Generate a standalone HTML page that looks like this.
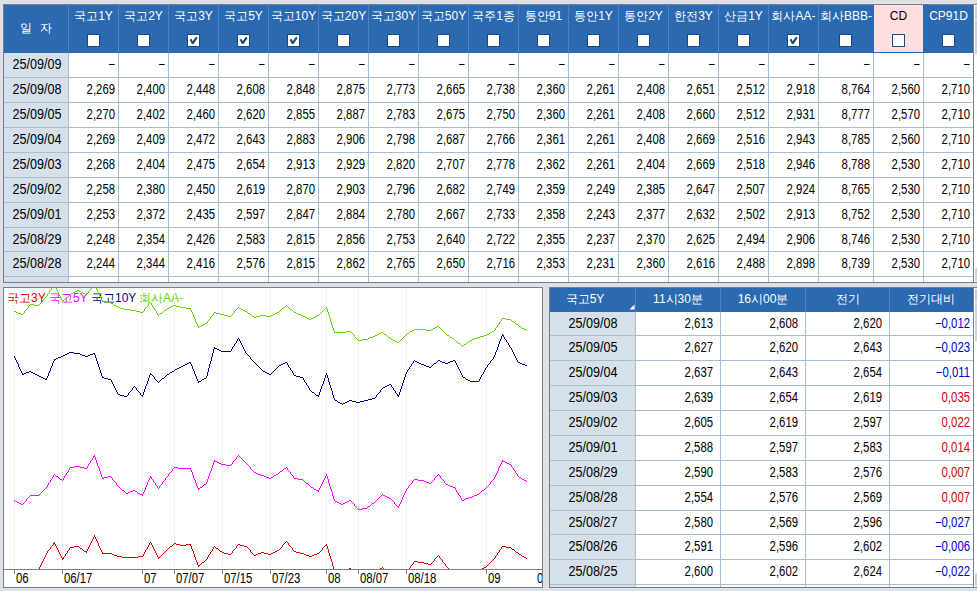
<!DOCTYPE html>
<html><head><meta charset="utf-8"><style>
html,body{margin:0;padding:0;}
body{width:977px;height:591px;position:relative;overflow:hidden;background:#dfe0e3;font-family:"Liberation Sans",sans-serif;}
.t{position:absolute;white-space:nowrap;line-height:1;}
</style></head><body>
<div style="position:absolute;left:3px;top:4px;width:974px;height:1px;background:#6e8194;"></div>
<div style="position:absolute;left:3px;top:4px;width:1px;height:279px;background:#6e8194;"></div>
<div style="position:absolute;left:3px;top:282px;width:974px;height:1px;background:#6e8194;"></div>
<div style="position:absolute;left:4px;top:5px;width:969px;height:277px;background:#fff;"></div>
<div style="position:absolute;left:974px;top:5px;width:3px;height:277px;background:#fff;"></div>
<div style="position:absolute;left:975px;top:6px;width:2px;height:13px;background:#c9d2de;"></div>
<div style="position:absolute;left:975px;top:20px;width:2px;height:34px;background:#c9d4e1;"></div>
<div style="position:absolute;left:975px;top:268px;width:2px;height:13px;background:#c9d2de;"></div>
<div style="position:absolute;left:973px;top:4px;width:1px;height:279px;background:#6e8194;"></div>
<div style="position:absolute;left:4px;top:5px;width:969px;height:48px;background:#2b69b1;"></div>
<div style="position:absolute;left:874px;top:5px;width:49px;height:47px;background:#ffdfdf;"></div>
<div style="position:absolute;left:68px;top:5px;width:1px;height:47px;background:#4f83c0;"></div>
<div style="position:absolute;left:118px;top:5px;width:1px;height:47px;background:#4f83c0;"></div>
<div style="position:absolute;left:168px;top:5px;width:1px;height:47px;background:#4f83c0;"></div>
<div style="position:absolute;left:218px;top:5px;width:1px;height:47px;background:#4f83c0;"></div>
<div style="position:absolute;left:268px;top:5px;width:1px;height:47px;background:#4f83c0;"></div>
<div style="position:absolute;left:318px;top:5px;width:1px;height:47px;background:#4f83c0;"></div>
<div style="position:absolute;left:368px;top:5px;width:1px;height:47px;background:#4f83c0;"></div>
<div style="position:absolute;left:418px;top:5px;width:1px;height:47px;background:#4f83c0;"></div>
<div style="position:absolute;left:468px;top:5px;width:1px;height:47px;background:#4f83c0;"></div>
<div style="position:absolute;left:518px;top:5px;width:1px;height:47px;background:#4f83c0;"></div>
<div style="position:absolute;left:568px;top:5px;width:1px;height:47px;background:#4f83c0;"></div>
<div style="position:absolute;left:618px;top:5px;width:1px;height:47px;background:#4f83c0;"></div>
<div style="position:absolute;left:668px;top:5px;width:1px;height:47px;background:#4f83c0;"></div>
<div style="position:absolute;left:718px;top:5px;width:1px;height:47px;background:#4f83c0;"></div>
<div style="position:absolute;left:768px;top:5px;width:1px;height:47px;background:#4f83c0;"></div>
<div style="position:absolute;left:818px;top:5px;width:1px;height:47px;background:#4f83c0;"></div>
<div style="position:absolute;left:4px;top:53px;width:64px;height:229px;background:#d5e0eb;"></div>
<div style="position:absolute;left:4px;top:77px;width:969px;height:1px;background:#a9bdd0;"></div>
<div style="position:absolute;left:4px;top:102px;width:969px;height:1px;background:#a9bdd0;"></div>
<div style="position:absolute;left:4px;top:127px;width:969px;height:1px;background:#a9bdd0;"></div>
<div style="position:absolute;left:4px;top:152px;width:969px;height:1px;background:#a9bdd0;"></div>
<div style="position:absolute;left:4px;top:177px;width:969px;height:1px;background:#a9bdd0;"></div>
<div style="position:absolute;left:4px;top:202px;width:969px;height:1px;background:#a9bdd0;"></div>
<div style="position:absolute;left:4px;top:227px;width:969px;height:1px;background:#a9bdd0;"></div>
<div style="position:absolute;left:4px;top:251px;width:969px;height:1px;background:#a9bdd0;"></div>
<div style="position:absolute;left:4px;top:276px;width:969px;height:1px;background:#a9bdd0;"></div>
<div style="position:absolute;left:68px;top:53px;width:1px;height:229px;background:#a9bdd0;"></div>
<div style="position:absolute;left:118px;top:53px;width:1px;height:229px;background:#a9bdd0;"></div>
<div style="position:absolute;left:168px;top:53px;width:1px;height:229px;background:#a9bdd0;"></div>
<div style="position:absolute;left:218px;top:53px;width:1px;height:229px;background:#a9bdd0;"></div>
<div style="position:absolute;left:268px;top:53px;width:1px;height:229px;background:#a9bdd0;"></div>
<div style="position:absolute;left:318px;top:53px;width:1px;height:229px;background:#a9bdd0;"></div>
<div style="position:absolute;left:368px;top:53px;width:1px;height:229px;background:#a9bdd0;"></div>
<div style="position:absolute;left:418px;top:53px;width:1px;height:229px;background:#a9bdd0;"></div>
<div style="position:absolute;left:468px;top:53px;width:1px;height:229px;background:#a9bdd0;"></div>
<div style="position:absolute;left:518px;top:53px;width:1px;height:229px;background:#a9bdd0;"></div>
<div style="position:absolute;left:568px;top:53px;width:1px;height:229px;background:#a9bdd0;"></div>
<div style="position:absolute;left:618px;top:53px;width:1px;height:229px;background:#a9bdd0;"></div>
<div style="position:absolute;left:668px;top:53px;width:1px;height:229px;background:#a9bdd0;"></div>
<div style="position:absolute;left:718px;top:53px;width:1px;height:229px;background:#a9bdd0;"></div>
<div style="position:absolute;left:768px;top:53px;width:1px;height:229px;background:#a9bdd0;"></div>
<div style="position:absolute;left:818px;top:53px;width:1px;height:229px;background:#a9bdd0;"></div>
<div style="position:absolute;left:873px;top:53px;width:1px;height:229px;background:#a9bdd0;"></div>
<div style="position:absolute;left:923px;top:53px;width:1px;height:229px;background:#a9bdd0;"></div>
<div class="t" style="left:20px;top:22px;font-size:12px;color:#fff;">일</div>
<div class="t" style="left:40px;top:22px;font-size:12px;color:#fff;">자</div>
<div class="t" style="left:-6.5px;width:200px;text-align:center;top:10px;font-size:12px;color:#fff;">국고1Y</div>
<div style="position:absolute;left:87px;top:34px;width:11px;height:11px;border:1px solid #1b4a80;background:#fff"></div>
<div class="t" style="left:43.5px;width:200px;text-align:center;top:10px;font-size:12px;color:#fff;">국고2Y</div>
<div style="position:absolute;left:137px;top:34px;width:11px;height:11px;border:1px solid #1b4a80;background:#fff"></div>
<div class="t" style="left:93.5px;width:200px;text-align:center;top:10px;font-size:12px;color:#fff;">국고3Y</div>
<div style="position:absolute;left:187px;top:34px;width:11px;height:11px;border:1px solid #1b4a80;background:#fff"></div>
<svg style="position:absolute;left:187px;top:34px" width="13" height="13"><path d="M3.6 5.2 L5.6 9.4 L9.8 3.4" stroke="#0e4178" stroke-width="2" fill="none" stroke-linejoin="bevel"/></svg>
<div class="t" style="left:143.5px;width:200px;text-align:center;top:10px;font-size:12px;color:#fff;">국고5Y</div>
<div style="position:absolute;left:237px;top:34px;width:11px;height:11px;border:1px solid #1b4a80;background:#fff"></div>
<svg style="position:absolute;left:237px;top:34px" width="13" height="13"><path d="M3.6 5.2 L5.6 9.4 L9.8 3.4" stroke="#0e4178" stroke-width="2" fill="none" stroke-linejoin="bevel"/></svg>
<div class="t" style="left:193.5px;width:200px;text-align:center;top:10px;font-size:12px;color:#fff;">국고10Y</div>
<div style="position:absolute;left:287px;top:34px;width:11px;height:11px;border:1px solid #1b4a80;background:#fff"></div>
<svg style="position:absolute;left:287px;top:34px" width="13" height="13"><path d="M3.6 5.2 L5.6 9.4 L9.8 3.4" stroke="#0e4178" stroke-width="2" fill="none" stroke-linejoin="bevel"/></svg>
<div class="t" style="left:243.5px;width:200px;text-align:center;top:10px;font-size:12px;color:#fff;">국고20Y</div>
<div style="position:absolute;left:337px;top:34px;width:11px;height:11px;border:1px solid #1b4a80;background:#fff"></div>
<div class="t" style="left:293.5px;width:200px;text-align:center;top:10px;font-size:12px;color:#fff;">국고30Y</div>
<div style="position:absolute;left:387px;top:34px;width:11px;height:11px;border:1px solid #1b4a80;background:#fff"></div>
<div class="t" style="left:343.5px;width:200px;text-align:center;top:10px;font-size:12px;color:#fff;">국고50Y</div>
<div style="position:absolute;left:437px;top:34px;width:11px;height:11px;border:1px solid #1b4a80;background:#fff"></div>
<div class="t" style="left:393.5px;width:200px;text-align:center;top:10px;font-size:12px;color:#fff;">국주1종</div>
<div style="position:absolute;left:487px;top:34px;width:11px;height:11px;border:1px solid #1b4a80;background:#fff"></div>
<div class="t" style="left:443.5px;width:200px;text-align:center;top:10px;font-size:12px;color:#fff;">통안91</div>
<div style="position:absolute;left:537px;top:34px;width:11px;height:11px;border:1px solid #1b4a80;background:#fff"></div>
<div class="t" style="left:493.5px;width:200px;text-align:center;top:10px;font-size:12px;color:#fff;">통안1Y</div>
<div style="position:absolute;left:587px;top:34px;width:11px;height:11px;border:1px solid #1b4a80;background:#fff"></div>
<div class="t" style="left:543.5px;width:200px;text-align:center;top:10px;font-size:12px;color:#fff;">통안2Y</div>
<div style="position:absolute;left:637px;top:34px;width:11px;height:11px;border:1px solid #1b4a80;background:#fff"></div>
<div class="t" style="left:593.5px;width:200px;text-align:center;top:10px;font-size:12px;color:#fff;">한전3Y</div>
<div style="position:absolute;left:687px;top:34px;width:11px;height:11px;border:1px solid #1b4a80;background:#fff"></div>
<div class="t" style="left:643.5px;width:200px;text-align:center;top:10px;font-size:12px;color:#fff;">산금1Y</div>
<div style="position:absolute;left:737px;top:34px;width:11px;height:11px;border:1px solid #1b4a80;background:#fff"></div>
<div class="t" style="left:693.5px;width:200px;text-align:center;top:10px;font-size:12px;color:#fff;">회사AA-</div>
<div style="position:absolute;left:787px;top:34px;width:11px;height:11px;border:1px solid #1b4a80;background:#fff"></div>
<svg style="position:absolute;left:787px;top:34px" width="13" height="13"><path d="M3.6 5.2 L5.6 9.4 L9.8 3.4" stroke="#0e4178" stroke-width="2" fill="none" stroke-linejoin="bevel"/></svg>
<div class="t" style="left:746.0px;width:200px;text-align:center;top:10px;font-size:12px;color:#fff;">회사BBB-</div>
<div style="position:absolute;left:839px;top:34px;width:11px;height:11px;border:1px solid #1b4a80;background:#fff"></div>
<div class="t" style="left:798.5px;width:200px;text-align:center;top:10px;font-size:12px;color:#000;">CD</div>
<div style="position:absolute;left:892px;top:34px;width:11px;height:11px;border:1px solid #1b4a80;background:#fff"></div>
<div class="t" style="left:848.5px;width:200px;text-align:center;top:10px;font-size:12px;color:#fff;">CP91D</div>
<div style="position:absolute;left:942px;top:34px;width:11px;height:11px;border:1px solid #1b4a80;background:#fff"></div>
<div class="t" style="left:-63.5px;width:200px;text-align:center;top:57px;font-size:14px;color:#000;transform:scaleX(0.9);transform-origin:center top;">25/09/09</div>
<div class="t" style="left:-85px;width:200px;text-align:right;top:57px;font-size:14px;color:#000;transform:scaleX(0.81);transform-origin:right top;">−</div>
<div class="t" style="left:-35px;width:200px;text-align:right;top:57px;font-size:14px;color:#000;transform:scaleX(0.81);transform-origin:right top;">−</div>
<div class="t" style="left:15px;width:200px;text-align:right;top:57px;font-size:14px;color:#000;transform:scaleX(0.81);transform-origin:right top;">−</div>
<div class="t" style="left:65px;width:200px;text-align:right;top:57px;font-size:14px;color:#000;transform:scaleX(0.81);transform-origin:right top;">−</div>
<div class="t" style="left:115px;width:200px;text-align:right;top:57px;font-size:14px;color:#000;transform:scaleX(0.81);transform-origin:right top;">−</div>
<div class="t" style="left:165px;width:200px;text-align:right;top:57px;font-size:14px;color:#000;transform:scaleX(0.81);transform-origin:right top;">−</div>
<div class="t" style="left:215px;width:200px;text-align:right;top:57px;font-size:14px;color:#000;transform:scaleX(0.81);transform-origin:right top;">−</div>
<div class="t" style="left:265px;width:200px;text-align:right;top:57px;font-size:14px;color:#000;transform:scaleX(0.81);transform-origin:right top;">−</div>
<div class="t" style="left:315px;width:200px;text-align:right;top:57px;font-size:14px;color:#000;transform:scaleX(0.81);transform-origin:right top;">−</div>
<div class="t" style="left:365px;width:200px;text-align:right;top:57px;font-size:14px;color:#000;transform:scaleX(0.81);transform-origin:right top;">−</div>
<div class="t" style="left:415px;width:200px;text-align:right;top:57px;font-size:14px;color:#000;transform:scaleX(0.81);transform-origin:right top;">−</div>
<div class="t" style="left:465px;width:200px;text-align:right;top:57px;font-size:14px;color:#000;transform:scaleX(0.81);transform-origin:right top;">−</div>
<div class="t" style="left:515px;width:200px;text-align:right;top:57px;font-size:14px;color:#000;transform:scaleX(0.81);transform-origin:right top;">−</div>
<div class="t" style="left:565px;width:200px;text-align:right;top:57px;font-size:14px;color:#000;transform:scaleX(0.81);transform-origin:right top;">−</div>
<div class="t" style="left:615px;width:200px;text-align:right;top:57px;font-size:14px;color:#000;transform:scaleX(0.81);transform-origin:right top;">−</div>
<div class="t" style="left:670px;width:200px;text-align:right;top:57px;font-size:14px;color:#000;transform:scaleX(0.81);transform-origin:right top;">−</div>
<div class="t" style="left:720px;width:200px;text-align:right;top:57px;font-size:14px;color:#000;transform:scaleX(0.81);transform-origin:right top;">−</div>
<div class="t" style="left:770px;width:200px;text-align:right;top:57px;font-size:14px;color:#000;transform:scaleX(0.81);transform-origin:right top;">−</div>
<div class="t" style="left:-63.5px;width:200px;text-align:center;top:82px;font-size:14px;color:#000;transform:scaleX(0.9);transform-origin:center top;">25/09/08</div>
<div class="t" style="left:-85px;width:200px;text-align:right;top:82px;font-size:14px;color:#000;transform:scaleX(0.81);transform-origin:right top;">2,269</div>
<div class="t" style="left:-35px;width:200px;text-align:right;top:82px;font-size:14px;color:#000;transform:scaleX(0.81);transform-origin:right top;">2,400</div>
<div class="t" style="left:15px;width:200px;text-align:right;top:82px;font-size:14px;color:#000;transform:scaleX(0.81);transform-origin:right top;">2,448</div>
<div class="t" style="left:65px;width:200px;text-align:right;top:82px;font-size:14px;color:#000;transform:scaleX(0.81);transform-origin:right top;">2,608</div>
<div class="t" style="left:115px;width:200px;text-align:right;top:82px;font-size:14px;color:#000;transform:scaleX(0.81);transform-origin:right top;">2,848</div>
<div class="t" style="left:165px;width:200px;text-align:right;top:82px;font-size:14px;color:#000;transform:scaleX(0.81);transform-origin:right top;">2,875</div>
<div class="t" style="left:215px;width:200px;text-align:right;top:82px;font-size:14px;color:#000;transform:scaleX(0.81);transform-origin:right top;">2,773</div>
<div class="t" style="left:265px;width:200px;text-align:right;top:82px;font-size:14px;color:#000;transform:scaleX(0.81);transform-origin:right top;">2,665</div>
<div class="t" style="left:315px;width:200px;text-align:right;top:82px;font-size:14px;color:#000;transform:scaleX(0.81);transform-origin:right top;">2,738</div>
<div class="t" style="left:365px;width:200px;text-align:right;top:82px;font-size:14px;color:#000;transform:scaleX(0.81);transform-origin:right top;">2,360</div>
<div class="t" style="left:415px;width:200px;text-align:right;top:82px;font-size:14px;color:#000;transform:scaleX(0.81);transform-origin:right top;">2,261</div>
<div class="t" style="left:465px;width:200px;text-align:right;top:82px;font-size:14px;color:#000;transform:scaleX(0.81);transform-origin:right top;">2,408</div>
<div class="t" style="left:515px;width:200px;text-align:right;top:82px;font-size:14px;color:#000;transform:scaleX(0.81);transform-origin:right top;">2,651</div>
<div class="t" style="left:565px;width:200px;text-align:right;top:82px;font-size:14px;color:#000;transform:scaleX(0.81);transform-origin:right top;">2,512</div>
<div class="t" style="left:615px;width:200px;text-align:right;top:82px;font-size:14px;color:#000;transform:scaleX(0.81);transform-origin:right top;">2,918</div>
<div class="t" style="left:670px;width:200px;text-align:right;top:82px;font-size:14px;color:#000;transform:scaleX(0.81);transform-origin:right top;">8,764</div>
<div class="t" style="left:720px;width:200px;text-align:right;top:82px;font-size:14px;color:#000;transform:scaleX(0.81);transform-origin:right top;">2,560</div>
<div class="t" style="left:770px;width:200px;text-align:right;top:82px;font-size:14px;color:#000;transform:scaleX(0.81);transform-origin:right top;">2,710</div>
<div class="t" style="left:-63.5px;width:200px;text-align:center;top:107px;font-size:14px;color:#000;transform:scaleX(0.9);transform-origin:center top;">25/09/05</div>
<div class="t" style="left:-85px;width:200px;text-align:right;top:107px;font-size:14px;color:#000;transform:scaleX(0.81);transform-origin:right top;">2,270</div>
<div class="t" style="left:-35px;width:200px;text-align:right;top:107px;font-size:14px;color:#000;transform:scaleX(0.81);transform-origin:right top;">2,402</div>
<div class="t" style="left:15px;width:200px;text-align:right;top:107px;font-size:14px;color:#000;transform:scaleX(0.81);transform-origin:right top;">2,460</div>
<div class="t" style="left:65px;width:200px;text-align:right;top:107px;font-size:14px;color:#000;transform:scaleX(0.81);transform-origin:right top;">2,620</div>
<div class="t" style="left:115px;width:200px;text-align:right;top:107px;font-size:14px;color:#000;transform:scaleX(0.81);transform-origin:right top;">2,855</div>
<div class="t" style="left:165px;width:200px;text-align:right;top:107px;font-size:14px;color:#000;transform:scaleX(0.81);transform-origin:right top;">2,887</div>
<div class="t" style="left:215px;width:200px;text-align:right;top:107px;font-size:14px;color:#000;transform:scaleX(0.81);transform-origin:right top;">2,783</div>
<div class="t" style="left:265px;width:200px;text-align:right;top:107px;font-size:14px;color:#000;transform:scaleX(0.81);transform-origin:right top;">2,675</div>
<div class="t" style="left:315px;width:200px;text-align:right;top:107px;font-size:14px;color:#000;transform:scaleX(0.81);transform-origin:right top;">2,750</div>
<div class="t" style="left:365px;width:200px;text-align:right;top:107px;font-size:14px;color:#000;transform:scaleX(0.81);transform-origin:right top;">2,360</div>
<div class="t" style="left:415px;width:200px;text-align:right;top:107px;font-size:14px;color:#000;transform:scaleX(0.81);transform-origin:right top;">2,261</div>
<div class="t" style="left:465px;width:200px;text-align:right;top:107px;font-size:14px;color:#000;transform:scaleX(0.81);transform-origin:right top;">2,408</div>
<div class="t" style="left:515px;width:200px;text-align:right;top:107px;font-size:14px;color:#000;transform:scaleX(0.81);transform-origin:right top;">2,660</div>
<div class="t" style="left:565px;width:200px;text-align:right;top:107px;font-size:14px;color:#000;transform:scaleX(0.81);transform-origin:right top;">2,512</div>
<div class="t" style="left:615px;width:200px;text-align:right;top:107px;font-size:14px;color:#000;transform:scaleX(0.81);transform-origin:right top;">2,931</div>
<div class="t" style="left:670px;width:200px;text-align:right;top:107px;font-size:14px;color:#000;transform:scaleX(0.81);transform-origin:right top;">8,777</div>
<div class="t" style="left:720px;width:200px;text-align:right;top:107px;font-size:14px;color:#000;transform:scaleX(0.81);transform-origin:right top;">2,570</div>
<div class="t" style="left:770px;width:200px;text-align:right;top:107px;font-size:14px;color:#000;transform:scaleX(0.81);transform-origin:right top;">2,710</div>
<div class="t" style="left:-63.5px;width:200px;text-align:center;top:132px;font-size:14px;color:#000;transform:scaleX(0.9);transform-origin:center top;">25/09/04</div>
<div class="t" style="left:-85px;width:200px;text-align:right;top:132px;font-size:14px;color:#000;transform:scaleX(0.81);transform-origin:right top;">2,269</div>
<div class="t" style="left:-35px;width:200px;text-align:right;top:132px;font-size:14px;color:#000;transform:scaleX(0.81);transform-origin:right top;">2,409</div>
<div class="t" style="left:15px;width:200px;text-align:right;top:132px;font-size:14px;color:#000;transform:scaleX(0.81);transform-origin:right top;">2,472</div>
<div class="t" style="left:65px;width:200px;text-align:right;top:132px;font-size:14px;color:#000;transform:scaleX(0.81);transform-origin:right top;">2,643</div>
<div class="t" style="left:115px;width:200px;text-align:right;top:132px;font-size:14px;color:#000;transform:scaleX(0.81);transform-origin:right top;">2,883</div>
<div class="t" style="left:165px;width:200px;text-align:right;top:132px;font-size:14px;color:#000;transform:scaleX(0.81);transform-origin:right top;">2,906</div>
<div class="t" style="left:215px;width:200px;text-align:right;top:132px;font-size:14px;color:#000;transform:scaleX(0.81);transform-origin:right top;">2,798</div>
<div class="t" style="left:265px;width:200px;text-align:right;top:132px;font-size:14px;color:#000;transform:scaleX(0.81);transform-origin:right top;">2,687</div>
<div class="t" style="left:315px;width:200px;text-align:right;top:132px;font-size:14px;color:#000;transform:scaleX(0.81);transform-origin:right top;">2,766</div>
<div class="t" style="left:365px;width:200px;text-align:right;top:132px;font-size:14px;color:#000;transform:scaleX(0.81);transform-origin:right top;">2,361</div>
<div class="t" style="left:415px;width:200px;text-align:right;top:132px;font-size:14px;color:#000;transform:scaleX(0.81);transform-origin:right top;">2,261</div>
<div class="t" style="left:465px;width:200px;text-align:right;top:132px;font-size:14px;color:#000;transform:scaleX(0.81);transform-origin:right top;">2,408</div>
<div class="t" style="left:515px;width:200px;text-align:right;top:132px;font-size:14px;color:#000;transform:scaleX(0.81);transform-origin:right top;">2,669</div>
<div class="t" style="left:565px;width:200px;text-align:right;top:132px;font-size:14px;color:#000;transform:scaleX(0.81);transform-origin:right top;">2,516</div>
<div class="t" style="left:615px;width:200px;text-align:right;top:132px;font-size:14px;color:#000;transform:scaleX(0.81);transform-origin:right top;">2,943</div>
<div class="t" style="left:670px;width:200px;text-align:right;top:132px;font-size:14px;color:#000;transform:scaleX(0.81);transform-origin:right top;">8,785</div>
<div class="t" style="left:720px;width:200px;text-align:right;top:132px;font-size:14px;color:#000;transform:scaleX(0.81);transform-origin:right top;">2,560</div>
<div class="t" style="left:770px;width:200px;text-align:right;top:132px;font-size:14px;color:#000;transform:scaleX(0.81);transform-origin:right top;">2,710</div>
<div class="t" style="left:-63.5px;width:200px;text-align:center;top:157px;font-size:14px;color:#000;transform:scaleX(0.9);transform-origin:center top;">25/09/03</div>
<div class="t" style="left:-85px;width:200px;text-align:right;top:157px;font-size:14px;color:#000;transform:scaleX(0.81);transform-origin:right top;">2,268</div>
<div class="t" style="left:-35px;width:200px;text-align:right;top:157px;font-size:14px;color:#000;transform:scaleX(0.81);transform-origin:right top;">2,404</div>
<div class="t" style="left:15px;width:200px;text-align:right;top:157px;font-size:14px;color:#000;transform:scaleX(0.81);transform-origin:right top;">2,475</div>
<div class="t" style="left:65px;width:200px;text-align:right;top:157px;font-size:14px;color:#000;transform:scaleX(0.81);transform-origin:right top;">2,654</div>
<div class="t" style="left:115px;width:200px;text-align:right;top:157px;font-size:14px;color:#000;transform:scaleX(0.81);transform-origin:right top;">2,913</div>
<div class="t" style="left:165px;width:200px;text-align:right;top:157px;font-size:14px;color:#000;transform:scaleX(0.81);transform-origin:right top;">2,929</div>
<div class="t" style="left:215px;width:200px;text-align:right;top:157px;font-size:14px;color:#000;transform:scaleX(0.81);transform-origin:right top;">2,820</div>
<div class="t" style="left:265px;width:200px;text-align:right;top:157px;font-size:14px;color:#000;transform:scaleX(0.81);transform-origin:right top;">2,707</div>
<div class="t" style="left:315px;width:200px;text-align:right;top:157px;font-size:14px;color:#000;transform:scaleX(0.81);transform-origin:right top;">2,778</div>
<div class="t" style="left:365px;width:200px;text-align:right;top:157px;font-size:14px;color:#000;transform:scaleX(0.81);transform-origin:right top;">2,362</div>
<div class="t" style="left:415px;width:200px;text-align:right;top:157px;font-size:14px;color:#000;transform:scaleX(0.81);transform-origin:right top;">2,261</div>
<div class="t" style="left:465px;width:200px;text-align:right;top:157px;font-size:14px;color:#000;transform:scaleX(0.81);transform-origin:right top;">2,404</div>
<div class="t" style="left:515px;width:200px;text-align:right;top:157px;font-size:14px;color:#000;transform:scaleX(0.81);transform-origin:right top;">2,669</div>
<div class="t" style="left:565px;width:200px;text-align:right;top:157px;font-size:14px;color:#000;transform:scaleX(0.81);transform-origin:right top;">2,518</div>
<div class="t" style="left:615px;width:200px;text-align:right;top:157px;font-size:14px;color:#000;transform:scaleX(0.81);transform-origin:right top;">2,946</div>
<div class="t" style="left:670px;width:200px;text-align:right;top:157px;font-size:14px;color:#000;transform:scaleX(0.81);transform-origin:right top;">8,788</div>
<div class="t" style="left:720px;width:200px;text-align:right;top:157px;font-size:14px;color:#000;transform:scaleX(0.81);transform-origin:right top;">2,530</div>
<div class="t" style="left:770px;width:200px;text-align:right;top:157px;font-size:14px;color:#000;transform:scaleX(0.81);transform-origin:right top;">2,710</div>
<div class="t" style="left:-63.5px;width:200px;text-align:center;top:182px;font-size:14px;color:#000;transform:scaleX(0.9);transform-origin:center top;">25/09/02</div>
<div class="t" style="left:-85px;width:200px;text-align:right;top:182px;font-size:14px;color:#000;transform:scaleX(0.81);transform-origin:right top;">2,258</div>
<div class="t" style="left:-35px;width:200px;text-align:right;top:182px;font-size:14px;color:#000;transform:scaleX(0.81);transform-origin:right top;">2,380</div>
<div class="t" style="left:15px;width:200px;text-align:right;top:182px;font-size:14px;color:#000;transform:scaleX(0.81);transform-origin:right top;">2,450</div>
<div class="t" style="left:65px;width:200px;text-align:right;top:182px;font-size:14px;color:#000;transform:scaleX(0.81);transform-origin:right top;">2,619</div>
<div class="t" style="left:115px;width:200px;text-align:right;top:182px;font-size:14px;color:#000;transform:scaleX(0.81);transform-origin:right top;">2,870</div>
<div class="t" style="left:165px;width:200px;text-align:right;top:182px;font-size:14px;color:#000;transform:scaleX(0.81);transform-origin:right top;">2,903</div>
<div class="t" style="left:215px;width:200px;text-align:right;top:182px;font-size:14px;color:#000;transform:scaleX(0.81);transform-origin:right top;">2,796</div>
<div class="t" style="left:265px;width:200px;text-align:right;top:182px;font-size:14px;color:#000;transform:scaleX(0.81);transform-origin:right top;">2,682</div>
<div class="t" style="left:315px;width:200px;text-align:right;top:182px;font-size:14px;color:#000;transform:scaleX(0.81);transform-origin:right top;">2,749</div>
<div class="t" style="left:365px;width:200px;text-align:right;top:182px;font-size:14px;color:#000;transform:scaleX(0.81);transform-origin:right top;">2,359</div>
<div class="t" style="left:415px;width:200px;text-align:right;top:182px;font-size:14px;color:#000;transform:scaleX(0.81);transform-origin:right top;">2,249</div>
<div class="t" style="left:465px;width:200px;text-align:right;top:182px;font-size:14px;color:#000;transform:scaleX(0.81);transform-origin:right top;">2,385</div>
<div class="t" style="left:515px;width:200px;text-align:right;top:182px;font-size:14px;color:#000;transform:scaleX(0.81);transform-origin:right top;">2,647</div>
<div class="t" style="left:565px;width:200px;text-align:right;top:182px;font-size:14px;color:#000;transform:scaleX(0.81);transform-origin:right top;">2,507</div>
<div class="t" style="left:615px;width:200px;text-align:right;top:182px;font-size:14px;color:#000;transform:scaleX(0.81);transform-origin:right top;">2,924</div>
<div class="t" style="left:670px;width:200px;text-align:right;top:182px;font-size:14px;color:#000;transform:scaleX(0.81);transform-origin:right top;">8,765</div>
<div class="t" style="left:720px;width:200px;text-align:right;top:182px;font-size:14px;color:#000;transform:scaleX(0.81);transform-origin:right top;">2,530</div>
<div class="t" style="left:770px;width:200px;text-align:right;top:182px;font-size:14px;color:#000;transform:scaleX(0.81);transform-origin:right top;">2,710</div>
<div class="t" style="left:-63.5px;width:200px;text-align:center;top:207px;font-size:14px;color:#000;transform:scaleX(0.9);transform-origin:center top;">25/09/01</div>
<div class="t" style="left:-85px;width:200px;text-align:right;top:207px;font-size:14px;color:#000;transform:scaleX(0.81);transform-origin:right top;">2,253</div>
<div class="t" style="left:-35px;width:200px;text-align:right;top:207px;font-size:14px;color:#000;transform:scaleX(0.81);transform-origin:right top;">2,372</div>
<div class="t" style="left:15px;width:200px;text-align:right;top:207px;font-size:14px;color:#000;transform:scaleX(0.81);transform-origin:right top;">2,435</div>
<div class="t" style="left:65px;width:200px;text-align:right;top:207px;font-size:14px;color:#000;transform:scaleX(0.81);transform-origin:right top;">2,597</div>
<div class="t" style="left:115px;width:200px;text-align:right;top:207px;font-size:14px;color:#000;transform:scaleX(0.81);transform-origin:right top;">2,847</div>
<div class="t" style="left:165px;width:200px;text-align:right;top:207px;font-size:14px;color:#000;transform:scaleX(0.81);transform-origin:right top;">2,884</div>
<div class="t" style="left:215px;width:200px;text-align:right;top:207px;font-size:14px;color:#000;transform:scaleX(0.81);transform-origin:right top;">2,780</div>
<div class="t" style="left:265px;width:200px;text-align:right;top:207px;font-size:14px;color:#000;transform:scaleX(0.81);transform-origin:right top;">2,667</div>
<div class="t" style="left:315px;width:200px;text-align:right;top:207px;font-size:14px;color:#000;transform:scaleX(0.81);transform-origin:right top;">2,733</div>
<div class="t" style="left:365px;width:200px;text-align:right;top:207px;font-size:14px;color:#000;transform:scaleX(0.81);transform-origin:right top;">2,358</div>
<div class="t" style="left:415px;width:200px;text-align:right;top:207px;font-size:14px;color:#000;transform:scaleX(0.81);transform-origin:right top;">2,243</div>
<div class="t" style="left:465px;width:200px;text-align:right;top:207px;font-size:14px;color:#000;transform:scaleX(0.81);transform-origin:right top;">2,377</div>
<div class="t" style="left:515px;width:200px;text-align:right;top:207px;font-size:14px;color:#000;transform:scaleX(0.81);transform-origin:right top;">2,632</div>
<div class="t" style="left:565px;width:200px;text-align:right;top:207px;font-size:14px;color:#000;transform:scaleX(0.81);transform-origin:right top;">2,502</div>
<div class="t" style="left:615px;width:200px;text-align:right;top:207px;font-size:14px;color:#000;transform:scaleX(0.81);transform-origin:right top;">2,913</div>
<div class="t" style="left:670px;width:200px;text-align:right;top:207px;font-size:14px;color:#000;transform:scaleX(0.81);transform-origin:right top;">8,752</div>
<div class="t" style="left:720px;width:200px;text-align:right;top:207px;font-size:14px;color:#000;transform:scaleX(0.81);transform-origin:right top;">2,530</div>
<div class="t" style="left:770px;width:200px;text-align:right;top:207px;font-size:14px;color:#000;transform:scaleX(0.81);transform-origin:right top;">2,710</div>
<div class="t" style="left:-63.5px;width:200px;text-align:center;top:232px;font-size:14px;color:#000;transform:scaleX(0.9);transform-origin:center top;">25/08/29</div>
<div class="t" style="left:-85px;width:200px;text-align:right;top:232px;font-size:14px;color:#000;transform:scaleX(0.81);transform-origin:right top;">2,248</div>
<div class="t" style="left:-35px;width:200px;text-align:right;top:232px;font-size:14px;color:#000;transform:scaleX(0.81);transform-origin:right top;">2,354</div>
<div class="t" style="left:15px;width:200px;text-align:right;top:232px;font-size:14px;color:#000;transform:scaleX(0.81);transform-origin:right top;">2,426</div>
<div class="t" style="left:65px;width:200px;text-align:right;top:232px;font-size:14px;color:#000;transform:scaleX(0.81);transform-origin:right top;">2,583</div>
<div class="t" style="left:115px;width:200px;text-align:right;top:232px;font-size:14px;color:#000;transform:scaleX(0.81);transform-origin:right top;">2,815</div>
<div class="t" style="left:165px;width:200px;text-align:right;top:232px;font-size:14px;color:#000;transform:scaleX(0.81);transform-origin:right top;">2,856</div>
<div class="t" style="left:215px;width:200px;text-align:right;top:232px;font-size:14px;color:#000;transform:scaleX(0.81);transform-origin:right top;">2,753</div>
<div class="t" style="left:265px;width:200px;text-align:right;top:232px;font-size:14px;color:#000;transform:scaleX(0.81);transform-origin:right top;">2,640</div>
<div class="t" style="left:315px;width:200px;text-align:right;top:232px;font-size:14px;color:#000;transform:scaleX(0.81);transform-origin:right top;">2,722</div>
<div class="t" style="left:365px;width:200px;text-align:right;top:232px;font-size:14px;color:#000;transform:scaleX(0.81);transform-origin:right top;">2,355</div>
<div class="t" style="left:415px;width:200px;text-align:right;top:232px;font-size:14px;color:#000;transform:scaleX(0.81);transform-origin:right top;">2,237</div>
<div class="t" style="left:465px;width:200px;text-align:right;top:232px;font-size:14px;color:#000;transform:scaleX(0.81);transform-origin:right top;">2,370</div>
<div class="t" style="left:515px;width:200px;text-align:right;top:232px;font-size:14px;color:#000;transform:scaleX(0.81);transform-origin:right top;">2,625</div>
<div class="t" style="left:565px;width:200px;text-align:right;top:232px;font-size:14px;color:#000;transform:scaleX(0.81);transform-origin:right top;">2,494</div>
<div class="t" style="left:615px;width:200px;text-align:right;top:232px;font-size:14px;color:#000;transform:scaleX(0.81);transform-origin:right top;">2,906</div>
<div class="t" style="left:670px;width:200px;text-align:right;top:232px;font-size:14px;color:#000;transform:scaleX(0.81);transform-origin:right top;">8,746</div>
<div class="t" style="left:720px;width:200px;text-align:right;top:232px;font-size:14px;color:#000;transform:scaleX(0.81);transform-origin:right top;">2,530</div>
<div class="t" style="left:770px;width:200px;text-align:right;top:232px;font-size:14px;color:#000;transform:scaleX(0.81);transform-origin:right top;">2,710</div>
<div class="t" style="left:-63.5px;width:200px;text-align:center;top:256px;font-size:14px;color:#000;transform:scaleX(0.9);transform-origin:center top;">25/08/28</div>
<div class="t" style="left:-85px;width:200px;text-align:right;top:256px;font-size:14px;color:#000;transform:scaleX(0.81);transform-origin:right top;">2,244</div>
<div class="t" style="left:-35px;width:200px;text-align:right;top:256px;font-size:14px;color:#000;transform:scaleX(0.81);transform-origin:right top;">2,344</div>
<div class="t" style="left:15px;width:200px;text-align:right;top:256px;font-size:14px;color:#000;transform:scaleX(0.81);transform-origin:right top;">2,416</div>
<div class="t" style="left:65px;width:200px;text-align:right;top:256px;font-size:14px;color:#000;transform:scaleX(0.81);transform-origin:right top;">2,576</div>
<div class="t" style="left:115px;width:200px;text-align:right;top:256px;font-size:14px;color:#000;transform:scaleX(0.81);transform-origin:right top;">2,815</div>
<div class="t" style="left:165px;width:200px;text-align:right;top:256px;font-size:14px;color:#000;transform:scaleX(0.81);transform-origin:right top;">2,862</div>
<div class="t" style="left:215px;width:200px;text-align:right;top:256px;font-size:14px;color:#000;transform:scaleX(0.81);transform-origin:right top;">2,765</div>
<div class="t" style="left:265px;width:200px;text-align:right;top:256px;font-size:14px;color:#000;transform:scaleX(0.81);transform-origin:right top;">2,650</div>
<div class="t" style="left:315px;width:200px;text-align:right;top:256px;font-size:14px;color:#000;transform:scaleX(0.81);transform-origin:right top;">2,716</div>
<div class="t" style="left:365px;width:200px;text-align:right;top:256px;font-size:14px;color:#000;transform:scaleX(0.81);transform-origin:right top;">2,353</div>
<div class="t" style="left:415px;width:200px;text-align:right;top:256px;font-size:14px;color:#000;transform:scaleX(0.81);transform-origin:right top;">2,231</div>
<div class="t" style="left:465px;width:200px;text-align:right;top:256px;font-size:14px;color:#000;transform:scaleX(0.81);transform-origin:right top;">2,360</div>
<div class="t" style="left:515px;width:200px;text-align:right;top:256px;font-size:14px;color:#000;transform:scaleX(0.81);transform-origin:right top;">2,616</div>
<div class="t" style="left:565px;width:200px;text-align:right;top:256px;font-size:14px;color:#000;transform:scaleX(0.81);transform-origin:right top;">2,488</div>
<div class="t" style="left:615px;width:200px;text-align:right;top:256px;font-size:14px;color:#000;transform:scaleX(0.81);transform-origin:right top;">2,898</div>
<div class="t" style="left:670px;width:200px;text-align:right;top:256px;font-size:14px;color:#000;transform:scaleX(0.81);transform-origin:right top;">8,739</div>
<div class="t" style="left:720px;width:200px;text-align:right;top:256px;font-size:14px;color:#000;transform:scaleX(0.81);transform-origin:right top;">2,530</div>
<div class="t" style="left:770px;width:200px;text-align:right;top:256px;font-size:14px;color:#000;transform:scaleX(0.81);transform-origin:right top;">2,710</div>
<div style="position:absolute;left:3px;top:287px;width:540px;height:1px;background:#6e8194;"></div>
<div style="position:absolute;left:3px;top:587px;width:540px;height:1px;background:#6e8194;"></div>
<div style="position:absolute;left:3px;top:287px;width:1px;height:301px;background:#6e8194;"></div>
<div style="position:absolute;left:542px;top:287px;width:1px;height:301px;background:#6e8194;"></div>
<div style="position:absolute;left:4px;top:288px;width:538px;height:299px;background:#fff;"></div>
<div class="t" style="left:7px;top:292px;font-size:12px;color:#e00000;">국고3Y</div>
<div class="t" style="left:49px;top:292px;font-size:12px;color:#ff00ff;">국고5Y</div>
<div class="t" style="left:91px;top:292px;font-size:12px;color:#000080;">국고10Y</div>
<div class="t" style="left:139px;top:292px;font-size:12px;color:#62d20a;">회사AA-</div>
<svg style="position:absolute;left:0;top:0" width="977" height="591">
<defs><clipPath id="cp"><rect x="4" y="288" width="538" height="281"/></clipPath></defs>
<rect x="14" y="288" width="1" height="281" fill="#f0f0f0"/>
<rect x="62" y="288" width="1" height="281" fill="#f0f0f0"/>
<rect x="142" y="288" width="1" height="281" fill="#f0f0f0"/>
<rect x="174" y="288" width="1" height="281" fill="#f0f0f0"/>
<rect x="222" y="288" width="1" height="281" fill="#f0f0f0"/>
<rect x="270" y="288" width="1" height="281" fill="#f0f0f0"/>
<rect x="326" y="288" width="1" height="281" fill="#f0f0f0"/>
<rect x="358" y="288" width="1" height="281" fill="#f0f0f0"/>
<rect x="406" y="288" width="1" height="281" fill="#f0f0f0"/>
<rect x="486" y="288" width="1" height="281" fill="#f0f0f0"/>
<rect x="4" y="569" width="538" height="1" fill="#7f7f7f"/>
<rect x="14" y="570" width="1" height="4" fill="#7f7f7f"/>
<rect x="62" y="570" width="1" height="4" fill="#7f7f7f"/>
<rect x="142" y="570" width="1" height="4" fill="#7f7f7f"/>
<rect x="174" y="570" width="1" height="4" fill="#7f7f7f"/>
<rect x="222" y="570" width="1" height="4" fill="#7f7f7f"/>
<rect x="270" y="570" width="1" height="4" fill="#7f7f7f"/>
<rect x="326" y="570" width="1" height="4" fill="#7f7f7f"/>
<rect x="358" y="570" width="1" height="4" fill="#7f7f7f"/>
<rect x="406" y="570" width="1" height="4" fill="#7f7f7f"/>
<rect x="486" y="570" width="1" height="4" fill="#7f7f7f"/>
<path d="M45 297h1v1h-1zM60 297h1v1h-1zM66 297h2v1h-2zM100 297h1v1h-1zM29 305h1v1h-1zM34 305h5v1h-5zM114 305h2v1h-2zM148 305h1v1h-1zM152 305h1v1h-1zM173 305h3v1h-3zM286 305h1v1h-1zM158 315h1v1h-1zM193 315h1v1h-1zM212 315h1v1h-1zM224 315h4v1h-4zM231 315h1v1h-1zM251 315h1v1h-1zM260 315h6v1h-6zM271 315h2v1h-2zM301 315h2v1h-2zM317 315h2v1h-2zM329 315h1v1h-1zM48 293h1v1h-1zM58 293h1v1h-1zM71 293h2v1h-2zM83 293h2v1h-2zM87 293h1v1h-1zM98 293h1v1h-1zM51 289h1v1h-1zM56 289h1v1h-1zM90 289h1v1h-1zM96 289h1v1h-1zM354 336h1v1h-1zM373 336h2v1h-2zM387 336h1v1h-1zM404 336h1v1h-1zM449 336h1v1h-1zM480 336h4v1h-4zM44 298h1v1h-1zM61 298h1v1h-1zM65 298h1v1h-1zM101 298h1v1h-1zM357 339h1v1h-1zM362 339h6v1h-6zM391 339h2v1h-2zM401 339h1v1h-1zM454 339h1v1h-1zM472 339h2v1h-2zM25 310h1v1h-1zM130 310h6v1h-6zM144 310h1v1h-1zM155 310h1v1h-1zM164 310h2v1h-2zM191 310h1v1h-1zM235 310h1v1h-1zM243 310h2v1h-2zM280 310h1v1h-1zM292 310h1v1h-1zM323 310h1v1h-1zM327 310h1v1h-1zM195 319h1v1h-1zM209 319h1v1h-1zM309 319h2v1h-2zM330 319h1v1h-1zM501 319h1v1h-1zM506 319h5v1h-5zM197 325h1v1h-1zM201 325h2v1h-2zM332 325h1v1h-1zM497 325h1v1h-1zM518 325h1v1h-1zM49 291h1v1h-1zM57 291h1v1h-1zM75 291h2v1h-2zM79 291h2v1h-2zM88 291h1v1h-1zM97 291h1v1h-1zM42 301h1v1h-1zM62 301h1v1h-1zM102 301h4v1h-4zM195 321h1v1h-1zM207 321h1v1h-1zM330 321h1v1h-1zM500 321h1v1h-1zM512 321h2v1h-2zM194 317h1v1h-1zM210 317h1v1h-1zM254 317h2v1h-2zM305 317h2v1h-2zM313 317h2v1h-2zM329 317h1v1h-1zM198 326h3v1h-3zM332 326h1v1h-1zM437 326h2v1h-2zM497 326h1v1h-1zM519 326h2v1h-2zM16 312h2v1h-2zM24 312h1v1h-1zM140 312h3v1h-3zM156 312h1v1h-1zM162 312h1v1h-1zM192 312h1v1h-1zM214 312h2v1h-2zM234 312h1v1h-1zM247 312h1v1h-1zM277 312h2v1h-2zM294 312h2v1h-2zM321 312h1v1h-1zM328 312h1v1h-1zM333 329h1v1h-1zM414 329h12v1h-12zM431 329h2v1h-2zM441 329h1v1h-1zM495 329h1v1h-1zM524 329h2v1h-2zM18 313h3v1h-3zM23 313h1v1h-1zM157 313h1v1h-1zM160 313h2v1h-2zM192 313h1v1h-1zM213 313h1v1h-1zM216 313h4v1h-4zM233 313h1v1h-1zM248 313h2v1h-2zM275 313h2v1h-2zM296 313h2v1h-2zM320 313h1v1h-1zM328 313h1v1h-1zM28 306h1v1h-1zM116 306h2v1h-2zM147 306h1v1h-1zM152 306h1v1h-1zM171 306h2v1h-2zM176 306h4v1h-4zM285 306h1v1h-1zM287 306h1v1h-1zM14 311h2v1h-2zM24 311h1v1h-1zM136 311h4v1h-4zM143 311h1v1h-1zM156 311h1v1h-1zM163 311h1v1h-1zM191 311h1v1h-1zM234 311h1v1h-1zM245 311h2v1h-2zM279 311h1v1h-1zM293 311h1v1h-1zM322 311h1v1h-1zM327 311h1v1h-1zM333 330h1v1h-1zM412 330h2v1h-2zM426 330h5v1h-5zM442 330h1v1h-1zM494 330h1v1h-1zM526 330h1v1h-1zM356 338h1v1h-1zM368 338h2v1h-2zM390 338h1v1h-1zM402 338h1v1h-1zM452 338h2v1h-2zM474 338h3v1h-3zM193 316h1v1h-1zM211 316h1v1h-1zM228 316h3v1h-3zM252 316h2v1h-2zM256 316h4v1h-4zM266 316h5v1h-5zM303 316h2v1h-2zM315 316h2v1h-2zM329 316h1v1h-1zM358 340h4v1h-4zM393 340h2v1h-2zM400 340h1v1h-1zM455 340h1v1h-1zM470 340h2v1h-2zM334 332h12v1h-12zM351 332h1v1h-1zM381 332h2v1h-2zM409 332h1v1h-1zM444 332h1v1h-1zM490 332h2v1h-2zM198 327h1v1h-1zM332 327h1v1h-1zM435 327h2v1h-2zM439 327h1v1h-1zM496 327h1v1h-1zM521 327h1v1h-1zM27 308h1v1h-1zM120 308h4v1h-4zM145 308h1v1h-1zM154 308h1v1h-1zM167 308h2v1h-2zM186 308h5v1h-5zM237 308h1v1h-1zM239 308h2v1h-2zM282 308h2v1h-2zM289 308h1v1h-1zM325 308h2v1h-2zM21 314h2v1h-2zM157 314h1v1h-1zM159 314h1v1h-1zM193 314h1v1h-1zM213 314h1v1h-1zM220 314h4v1h-4zM232 314h1v1h-1zM250 314h1v1h-1zM273 314h2v1h-2zM298 314h3v1h-3zM319 314h1v1h-1zM328 314h1v1h-1zM397 342h2v1h-2zM457 342h1v1h-1zM467 342h1v1h-1zM26 309h1v1h-1zM124 309h6v1h-6zM144 309h1v1h-1zM154 309h1v1h-1zM166 309h1v1h-1zM190 309h1v1h-1zM236 309h1v1h-1zM241 309h2v1h-2zM281 309h1v1h-1zM290 309h2v1h-2zM324 309h1v1h-1zM327 309h1v1h-1zM395 341h2v1h-2zM399 341h1v1h-1zM456 341h1v1h-1zM468 341h2v1h-2zM333 328h1v1h-1zM433 328h2v1h-2zM440 328h1v1h-1zM495 328h1v1h-1zM522 328h2v1h-2zM41 302h1v1h-1zM106 302h5v1h-5zM150 302h1v1h-1zM355 337h1v1h-1zM370 337h3v1h-3zM388 337h2v1h-2zM403 337h1v1h-1zM450 337h2v1h-2zM477 337h3v1h-3zM352 333h1v1h-1zM379 333h2v1h-2zM383 333h1v1h-1zM407 333h2v1h-2zM445 333h1v1h-1zM489 333h1v1h-1zM28 307h1v1h-1zM118 307h2v1h-2zM146 307h1v1h-1zM153 307h1v1h-1zM169 307h2v1h-2zM180 307h6v1h-6zM238 307h1v1h-1zM284 307h1v1h-1zM288 307h1v1h-1zM326 307h1v1h-1zM49 292h1v1h-1zM58 292h1v1h-1zM73 292h2v1h-2zM81 292h2v1h-2zM88 292h1v1h-1zM98 292h1v1h-1zM196 323h1v1h-1zM205 323h2v1h-2zM331 323h1v1h-1zM499 323h1v1h-1zM515 323h1v1h-1zM40 303h1v1h-1zM111 303h2v1h-2zM149 303h1v1h-1zM151 303h1v1h-1zM353 334h1v1h-1zM377 334h2v1h-2zM384 334h2v1h-2zM406 334h1v1h-1zM446 334h1v1h-1zM487 334h2v1h-2zM47 294h1v1h-1zM59 294h1v1h-1zM70 294h1v1h-1zM85 294h2v1h-2zM99 294h1v1h-1zM194 318h1v1h-1zM210 318h1v1h-1zM307 318h2v1h-2zM311 318h2v1h-2zM330 318h1v1h-1zM502 318h4v1h-4zM354 335h1v1h-1zM375 335h2v1h-2zM386 335h1v1h-1zM405 335h1v1h-1zM447 335h2v1h-2zM484 335h3v1h-3zM50 290h1v1h-1zM57 290h1v1h-1zM77 290h2v1h-2zM89 290h1v1h-1zM97 290h1v1h-1zM334 331h1v1h-1zM346 331h5v1h-5zM410 331h2v1h-2zM443 331h1v1h-1zM492 331h2v1h-2zM196 322h1v1h-1zM207 322h1v1h-1zM331 322h1v1h-1zM499 322h1v1h-1zM514 322h1v1h-1zM30 304h4v1h-4zM39 304h1v1h-1zM113 304h1v1h-1zM148 304h1v1h-1zM151 304h1v1h-1zM460 344h1v1h-1zM464 344h2v1h-2zM47 295h1v1h-1zM59 295h1v1h-1zM69 295h1v1h-1zM99 295h1v1h-1zM46 296h1v1h-1zM60 296h1v1h-1zM68 296h1v1h-1zM100 296h1v1h-1zM43 299h1v1h-1zM61 299h1v1h-1zM64 299h1v1h-1zM101 299h1v1h-1zM42 300h1v1h-1zM62 300h2v1h-2zM102 300h1v1h-1zM458 343h2v1h-2zM466 343h1v1h-1zM51 288h1v1h-1zM56 288h1v1h-1zM91 288h1v1h-1zM96 288h1v1h-1zM197 324h1v1h-1zM203 324h2v1h-2zM331 324h1v1h-1zM498 324h1v1h-1zM516 324h2v1h-2zM195 320h1v1h-1zM208 320h1v1h-1zM330 320h1v1h-1zM501 320h1v1h-1zM511 320h1v1h-1zM461 345h1v1h-1zM463 345h1v1h-1zM462 346h1v1h-1z" fill="#62d20a"/>
<path d="M114 387h1v1h-1zM133 387h1v1h-1zM135 387h1v1h-1zM145 387h1v1h-1zM308 387h1v1h-1zM321 387h1v1h-1zM330 387h1v1h-1zM383 387h2v1h-2zM392 387h1v1h-1zM401 387h1v1h-1zM22 374h2v1h-2zM35 374h2v1h-2zM48 374h1v1h-1zM101 374h1v1h-1zM150 374h2v1h-2zM167 374h2v1h-2zM195 374h1v1h-1zM207 374h1v1h-1zM269 374h2v1h-2zM293 374h1v1h-1zM326 374h1v1h-1zM405 374h1v1h-1zM461 374h1v1h-1zM482 374h1v1h-1zM20 370h1v1h-1zM50 370h1v1h-1zM100 370h1v1h-1zM174 370h1v1h-1zM193 370h1v1h-1zM208 370h1v1h-1zM262 370h1v1h-1zM274 370h1v1h-1zM291 370h1v1h-1zM407 370h1v1h-1zM459 370h1v1h-1zM484 370h1v1h-1zM22 373h1v1h-1zM24 373h2v1h-2zM33 373h2v1h-2zM48 373h1v1h-1zM101 373h1v1h-1zM150 373h1v1h-1zM169 373h1v1h-1zM194 373h1v1h-1zM207 373h1v1h-1zM267 373h2v1h-2zM271 373h1v1h-1zM293 373h1v1h-1zM326 373h1v1h-1zM406 373h1v1h-1zM461 373h1v1h-1zM483 373h1v1h-1zM111 380h1v1h-1zM148 380h1v1h-1zM156 380h1v1h-1zM160 380h1v1h-1zM197 380h1v1h-1zM201 380h1v1h-1zM304 380h1v1h-1zM324 380h1v1h-1zM328 380h1v1h-1zM403 380h1v1h-1zM468 380h2v1h-2zM479 380h1v1h-1zM16 360h1v1h-1zM54 360h1v1h-1zM96 360h1v1h-1zM211 360h1v1h-1zM252 360h1v1h-1zM414 360h1v1h-1zM438 360h2v1h-2zM453 360h2v1h-2zM491 360h1v1h-1zM517 360h1v1h-1zM113 385h1v1h-1zM146 385h1v1h-1zM307 385h1v1h-1zM322 385h1v1h-1zM330 385h1v1h-1zM387 385h2v1h-2zM391 385h1v1h-1zM402 385h1v1h-1zM37 375h2v1h-2zM48 375h1v1h-1zM101 375h1v1h-1zM149 375h1v1h-1zM152 375h1v1h-1zM166 375h1v1h-1zM195 375h1v1h-1zM207 375h1v1h-1zM294 375h2v1h-2zM325 375h1v1h-1zM327 375h1v1h-1zM405 375h1v1h-1zM462 375h1v1h-1zM481 375h1v1h-1zM17 362h1v1h-1zM53 362h1v1h-1zM97 362h1v1h-1zM189 362h2v1h-2zM210 362h1v1h-1zM254 362h1v1h-1zM285 362h2v1h-2zM413 362h1v1h-1zM417 362h2v1h-2zM436 362h1v1h-1zM442 362h3v1h-3zM448 362h2v1h-2zM455 362h1v1h-1zM490 362h1v1h-1zM518 362h2v1h-2zM43 378h2v1h-2zM46 378h1v1h-1zM104 378h4v1h-4zM148 378h1v1h-1zM154 378h1v1h-1zM162 378h2v1h-2zM196 378h1v1h-1zM204 378h2v1h-2zM303 378h1v1h-1zM324 378h1v1h-1zM328 378h1v1h-1zM404 378h1v1h-1zM465 378h1v1h-1zM480 378h1v1h-1zM113 384h1v1h-1zM146 384h1v1h-1zM306 384h1v1h-1zM322 384h1v1h-1zM329 384h1v1h-1zM389 384h2v1h-2zM402 384h1v1h-1zM114 386h1v1h-1zM134 386h1v1h-1zM145 386h1v1h-1zM308 386h1v1h-1zM321 386h1v1h-1zM330 386h1v1h-1zM385 386h2v1h-2zM391 386h1v1h-1zM401 386h1v1h-1zM117 393h1v1h-1zM128 393h1v1h-1zM140 393h1v1h-1zM143 393h1v1h-1zM314 393h1v1h-1zM319 393h1v1h-1zM332 393h1v1h-1zM378 393h1v1h-1zM396 393h1v1h-1zM399 393h1v1h-1zM334 398h1v1h-1zM372 398h3v1h-3zM20 369h1v1h-1zM50 369h1v1h-1zM99 369h1v1h-1zM175 369h2v1h-2zM193 369h1v1h-1zM208 369h1v1h-1zM261 369h1v1h-1zM275 369h1v1h-1zM290 369h1v1h-1zM408 369h1v1h-1zM459 369h1v1h-1zM485 369h1v1h-1zM14 356h1v1h-1zM61 356h2v1h-2zM85 356h3v1h-3zM95 356h1v1h-1zM212 356h1v1h-1zM249 356h1v1h-1zM494 356h1v1h-1zM515 356h1v1h-1zM337 401h1v1h-1zM347 401h2v1h-2zM352 401h4v1h-4zM360 401h4v1h-4zM18 365h1v1h-1zM52 365h1v1h-1zM98 365h1v1h-1zM183 365h2v1h-2zM191 365h1v1h-1zM209 365h1v1h-1zM257 365h1v1h-1zM279 365h2v1h-2zM288 365h1v1h-1zM411 365h1v1h-1zM424 365h2v1h-2zM432 365h1v1h-1zM457 365h1v1h-1zM487 365h1v1h-1zM525 365h2v1h-2zM45 379h2v1h-2zM108 379h3v1h-3zM148 379h1v1h-1zM155 379h1v1h-1zM161 379h1v1h-1zM197 379h1v1h-1zM202 379h2v1h-2zM303 379h1v1h-1zM324 379h1v1h-1zM328 379h1v1h-1zM404 379h1v1h-1zM466 379h2v1h-2zM479 379h1v1h-1zM21 372h1v1h-1zM26 372h3v1h-3zM31 372h2v1h-2zM49 372h1v1h-1zM100 372h1v1h-1zM170 372h2v1h-2zM194 372h1v1h-1zM207 372h1v1h-1zM265 372h2v1h-2zM272 372h1v1h-1zM292 372h1v1h-1zM406 372h1v1h-1zM460 372h1v1h-1zM483 372h1v1h-1zM19 368h1v1h-1zM50 368h1v1h-1zM99 368h1v1h-1zM177 368h2v1h-2zM192 368h1v1h-1zM208 368h1v1h-1zM260 368h1v1h-1zM276 368h1v1h-1zM290 368h1v1h-1zM409 368h1v1h-1zM458 368h1v1h-1zM485 368h1v1h-1zM116 390h1v1h-1zM131 390h1v1h-1zM137 390h1v1h-1zM144 390h1v1h-1zM310 390h1v1h-1zM320 390h1v1h-1zM331 390h1v1h-1zM380 390h1v1h-1zM394 390h1v1h-1zM400 390h1v1h-1zM120 395h4v1h-4zM127 395h1v1h-1zM141 395h2v1h-2zM316 395h3v1h-3zM333 395h1v1h-1zM376 395h1v1h-1zM397 395h2v1h-2zM41 377h2v1h-2zM47 377h1v1h-1zM102 377h2v1h-2zM149 377h1v1h-1zM154 377h1v1h-1zM164 377h1v1h-1zM196 377h1v1h-1zM206 377h1v1h-1zM300 377h3v1h-3zM325 377h1v1h-1zM327 377h1v1h-1zM404 377h1v1h-1zM463 377h2v1h-2zM480 377h1v1h-1zM65 354h2v1h-2zM80 354h2v1h-2zM90 354h3v1h-3zM94 354h1v1h-1zM212 354h1v1h-1zM247 354h1v1h-1zM495 354h1v1h-1zM514 354h1v1h-1zM39 376h2v1h-2zM47 376h1v1h-1zM102 376h1v1h-1zM149 376h1v1h-1zM153 376h1v1h-1zM165 376h1v1h-1zM196 376h1v1h-1zM206 376h1v1h-1zM296 376h4v1h-4zM325 376h1v1h-1zM327 376h1v1h-1zM405 376h1v1h-1zM462 376h1v1h-1zM481 376h1v1h-1zM117 392h1v1h-1zM129 392h1v1h-1zM139 392h1v1h-1zM143 392h1v1h-1zM312 392h2v1h-2zM319 392h1v1h-1zM332 392h1v1h-1zM379 392h1v1h-1zM395 392h1v1h-1zM399 392h1v1h-1zM237 339h1v1h-1zM239 339h1v1h-1zM500 339h1v1h-1zM505 339h1v1h-1zM335 400h2v1h-2zM349 400h3v1h-3zM364 400h4v1h-4zM17 363h1v1h-1zM52 363h1v1h-1zM97 363h1v1h-1zM187 363h2v1h-2zM190 363h1v1h-1zM210 363h1v1h-1zM255 363h1v1h-1zM283 363h2v1h-2zM287 363h1v1h-1zM412 363h1v1h-1zM419 363h2v1h-2zM434 363h2v1h-2zM445 363h3v1h-3zM456 363h1v1h-1zM489 363h1v1h-1zM520 363h2v1h-2zM19 367h1v1h-1zM51 367h1v1h-1zM99 367h1v1h-1zM179 367h2v1h-2zM192 367h1v1h-1zM209 367h1v1h-1zM259 367h1v1h-1zM277 367h1v1h-1zM289 367h1v1h-1zM409 367h1v1h-1zM429 367h2v1h-2zM458 367h1v1h-1zM486 367h1v1h-1zM15 359h1v1h-1zM54 359h2v1h-2zM96 359h1v1h-1zM211 359h1v1h-1zM251 359h1v1h-1zM492 359h1v1h-1zM516 359h1v1h-1zM18 364h1v1h-1zM52 364h1v1h-1zM98 364h1v1h-1zM185 364h2v1h-2zM191 364h1v1h-1zM209 364h1v1h-1zM256 364h1v1h-1zM281 364h2v1h-2zM287 364h1v1h-1zM411 364h1v1h-1zM421 364h3v1h-3zM433 364h1v1h-1zM456 364h1v1h-1zM488 364h1v1h-1zM522 364h3v1h-3zM69 352h5v1h-5zM213 352h1v1h-1zM245 352h1v1h-1zM495 352h1v1h-1zM513 352h1v1h-1zM21 371h1v1h-1zM29 371h2v1h-2zM49 371h1v1h-1zM100 371h1v1h-1zM172 371h2v1h-2zM194 371h1v1h-1zM208 371h1v1h-1zM263 371h2v1h-2zM273 371h1v1h-1zM292 371h1v1h-1zM407 371h1v1h-1zM460 371h1v1h-1zM484 371h1v1h-1zM116 391h1v1h-1zM130 391h1v1h-1zM138 391h1v1h-1zM144 391h1v1h-1zM311 391h1v1h-1zM320 391h1v1h-1zM332 391h1v1h-1zM380 391h1v1h-1zM395 391h1v1h-1zM400 391h1v1h-1zM338 402h2v1h-2zM345 402h2v1h-2zM356 402h4v1h-4zM213 350h1v1h-1zM219 350h2v1h-2zM231 350h1v1h-1zM244 350h1v1h-1zM496 350h1v1h-1zM512 350h1v1h-1zM112 383h1v1h-1zM147 383h1v1h-1zM306 383h1v1h-1zM323 383h1v1h-1zM329 383h1v1h-1zM402 383h1v1h-1zM233 346h1v1h-1zM242 346h1v1h-1zM498 346h1v1h-1zM509 346h1v1h-1zM67 353h2v1h-2zM74 353h6v1h-6zM93 353h2v1h-2zM212 353h1v1h-1zM246 353h1v1h-1zM495 353h1v1h-1zM513 353h1v1h-1zM63 355h2v1h-2zM82 355h3v1h-3zM88 355h2v1h-2zM95 355h1v1h-1zM212 355h1v1h-1zM248 355h1v1h-1zM494 355h1v1h-1zM514 355h1v1h-1zM236 342h1v1h-1zM240 342h1v1h-1zM499 342h1v1h-1zM507 342h1v1h-1zM111 381h1v1h-1zM147 381h1v1h-1zM157 381h1v1h-1zM159 381h1v1h-1zM198 381h3v1h-3zM304 381h1v1h-1zM323 381h1v1h-1zM328 381h1v1h-1zM403 381h1v1h-1zM470 381h9v1h-9zM213 351h1v1h-1zM221 351h10v1h-10zM245 351h1v1h-1zM496 351h1v1h-1zM512 351h1v1h-1zM15 358h1v1h-1zM56 358h2v1h-2zM96 358h1v1h-1zM211 358h1v1h-1zM250 358h1v1h-1zM493 358h1v1h-1zM516 358h1v1h-1zM16 361h1v1h-1zM53 361h1v1h-1zM97 361h1v1h-1zM210 361h1v1h-1zM253 361h1v1h-1zM413 361h1v1h-1zM415 361h2v1h-2zM437 361h1v1h-1zM440 361h2v1h-2zM450 361h3v1h-3zM455 361h1v1h-1zM490 361h1v1h-1zM517 361h1v1h-1zM18 366h1v1h-1zM51 366h1v1h-1zM98 366h1v1h-1zM181 366h2v1h-2zM192 366h1v1h-1zM209 366h1v1h-1zM258 366h1v1h-1zM278 366h1v1h-1zM288 366h1v1h-1zM410 366h1v1h-1zM426 366h3v1h-3zM431 366h1v1h-1zM457 366h1v1h-1zM487 366h1v1h-1zM115 388h1v1h-1zM132 388h1v1h-1zM136 388h1v1h-1zM145 388h1v1h-1zM309 388h1v1h-1zM321 388h1v1h-1zM331 388h1v1h-1zM382 388h1v1h-1zM393 388h1v1h-1zM401 388h1v1h-1zM124 396h3v1h-3zM142 396h1v1h-1zM318 396h1v1h-1zM333 396h1v1h-1zM376 396h1v1h-1zM398 396h1v1h-1zM115 389h1v1h-1zM132 389h1v1h-1zM136 389h1v1h-1zM144 389h1v1h-1zM309 389h1v1h-1zM320 389h1v1h-1zM331 389h1v1h-1zM381 389h1v1h-1zM393 389h1v1h-1zM400 389h1v1h-1zM502 335h2v1h-2zM501 336h1v1h-1zM503 336h1v1h-1zM236 341h1v1h-1zM240 341h1v1h-1zM499 341h1v1h-1zM506 341h1v1h-1zM340 403h2v1h-2zM343 403h2v1h-2zM14 357h1v1h-1zM58 357h3v1h-3zM95 357h1v1h-1zM211 357h1v1h-1zM250 357h1v1h-1zM493 357h1v1h-1zM515 357h1v1h-1zM118 394h2v1h-2zM128 394h1v1h-1zM140 394h1v1h-1zM143 394h1v1h-1zM315 394h1v1h-1zM319 394h1v1h-1zM332 394h1v1h-1zM377 394h1v1h-1zM397 394h1v1h-1zM399 394h1v1h-1zM213 349h1v1h-1zM217 349h2v1h-2zM231 349h1v1h-1zM244 349h1v1h-1zM497 349h1v1h-1zM511 349h1v1h-1zM334 399h1v1h-1zM368 399h4v1h-4zM502 334h1v1h-1zM333 397h1v1h-1zM375 397h1v1h-1zM214 348h3v1h-3zM232 348h1v1h-1zM243 348h1v1h-1zM497 348h1v1h-1zM511 348h1v1h-1zM238 338h1v1h-1zM501 338h1v1h-1zM504 338h1v1h-1zM235 343h1v1h-1zM241 343h1v1h-1zM499 343h1v1h-1zM508 343h1v1h-1zM501 337h1v1h-1zM504 337h1v1h-1zM234 344h1v1h-1zM241 344h1v1h-1zM498 344h1v1h-1zM508 344h1v1h-1zM237 340h1v1h-1zM239 340h1v1h-1zM500 340h1v1h-1zM506 340h1v1h-1zM112 382h1v1h-1zM147 382h1v1h-1zM158 382h1v1h-1zM198 382h1v1h-1zM305 382h1v1h-1zM323 382h1v1h-1zM329 382h1v1h-1zM403 382h1v1h-1zM342 404h1v1h-1zM234 345h1v1h-1zM242 345h1v1h-1zM498 345h1v1h-1zM509 345h1v1h-1zM214 347h1v1h-1zM232 347h1v1h-1zM243 347h1v1h-1zM497 347h1v1h-1zM510 347h1v1h-1z" fill="#000080"/>
<path d="M50 481h1v1h-1zM114 481h1v1h-1zM148 481h1v1h-1zM153 481h1v1h-1zM163 481h1v1h-1zM195 481h1v1h-1zM207 481h1v1h-1zM304 481h1v1h-1zM323 481h1v1h-1zM328 481h1v1h-1zM412 481h1v1h-1zM424 481h2v1h-2zM432 481h1v1h-1zM444 481h1v1h-1zM491 481h1v1h-1zM526 481h1v1h-1zM46 487h1v1h-1zM119 487h1v1h-1zM145 487h1v1h-1zM157 487h1v1h-1zM159 487h1v1h-1zM197 487h1v1h-1zM200 487h2v1h-2zM311 487h2v1h-2zM320 487h1v1h-1zM330 487h1v1h-1zM408 487h1v1h-1zM453 487h2v1h-2zM486 487h1v1h-1zM47 486h1v1h-1zM118 486h1v1h-1zM146 486h1v1h-1zM157 486h1v1h-1zM159 486h1v1h-1zM197 486h1v1h-1zM202 486h1v1h-1zM310 486h1v1h-1zM320 486h1v1h-1zM330 486h1v1h-1zM408 486h1v1h-1zM450 486h3v1h-3zM487 486h1v1h-1zM15 501h2v1h-2zM25 501h1v1h-1zM335 501h2v1h-2zM347 501h2v1h-2zM351 501h1v1h-1zM375 501h1v1h-1zM393 501h1v1h-1zM401 501h1v1h-1zM49 482h1v1h-1zM115 482h1v1h-1zM147 482h1v1h-1zM154 482h1v1h-1zM162 482h1v1h-1zM195 482h1v1h-1zM206 482h1v1h-1zM305 482h1v1h-1zM322 482h1v1h-1zM328 482h1v1h-1zM412 482h1v1h-1zM426 482h3v1h-3zM431 482h1v1h-1zM444 482h1v1h-1zM490 482h1v1h-1zM92 458h1v1h-1zM95 458h1v1h-1zM236 458h1v1h-1zM241 458h1v1h-1zM27 498h1v1h-1zM333 498h1v1h-1zM378 498h1v1h-1zM389 498h2v1h-2zM402 498h1v1h-1zM461 498h1v1h-1zM466 498h3v1h-3zM48 483h1v1h-1zM116 483h1v1h-1zM147 483h1v1h-1zM155 483h1v1h-1zM162 483h1v1h-1zM196 483h1v1h-1zM206 483h1v1h-1zM306 483h2v1h-2zM322 483h1v1h-1zM329 483h1v1h-1zM411 483h1v1h-1zM429 483h2v1h-2zM445 483h1v1h-1zM490 483h1v1h-1zM67 472h1v1h-1zM100 472h1v1h-1zM170 472h1v1h-1zM192 472h1v1h-1zM210 472h1v1h-1zM254 472h2v1h-2zM279 472h1v1h-1zM290 472h1v1h-1zM497 472h1v1h-1zM515 472h1v1h-1zM19 503h2v1h-2zM23 503h1v1h-1zM339 503h2v1h-2zM343 503h2v1h-2zM353 503h1v1h-1zM372 503h2v1h-2zM394 503h1v1h-1zM400 503h1v1h-1zM52 477h1v1h-1zM58 477h1v1h-1zM64 477h1v1h-1zM102 477h1v1h-1zM104 477h4v1h-4zM111 477h1v1h-1zM150 477h2v1h-2zM166 477h1v1h-1zM193 477h1v1h-1zM208 477h1v1h-1zM266 477h3v1h-3zM271 477h2v1h-2zM293 477h1v1h-1zM325 477h1v1h-1zM327 477h1v1h-1zM435 477h1v1h-1zM440 477h1v1h-1zM494 477h1v1h-1zM519 477h2v1h-2zM74 466h6v1h-6zM87 466h1v1h-1zM98 466h1v1h-1zM212 466h1v1h-1zM249 466h1v1h-1zM499 466h1v1h-1zM511 466h1v1h-1zM45 488h1v1h-1zM120 488h1v1h-1zM145 488h1v1h-1zM158 488h1v1h-1zM198 488h2v1h-2zM313 488h1v1h-1zM319 488h1v1h-1zM330 488h1v1h-1zM407 488h1v1h-1zM455 488h1v1h-1zM485 488h1v1h-1zM30 495h9v1h-9zM142 495h1v1h-1zM332 495h1v1h-1zM381 495h1v1h-1zM383 495h2v1h-2zM403 495h1v1h-1zM459 495h1v1h-1zM474 495h3v1h-3zM69 469h1v1h-1zM99 469h1v1h-1zM172 469h1v1h-1zM190 469h1v1h-1zM211 469h1v1h-1zM251 469h1v1h-1zM283 469h1v1h-1zM287 469h1v1h-1zM498 469h1v1h-1zM513 469h1v1h-1zM52 478h1v1h-1zM59 478h1v1h-1zM63 478h1v1h-1zM102 478h2v1h-2zM112 478h1v1h-1zM149 478h1v1h-1zM151 478h1v1h-1zM165 478h1v1h-1zM194 478h1v1h-1zM208 478h1v1h-1zM269 478h2v1h-2zM294 478h4v1h-4zM324 478h1v1h-1zM327 478h1v1h-1zM434 478h1v1h-1zM441 478h1v1h-1zM494 478h1v1h-1zM521 478h1v1h-1zM26 499h1v1h-1zM334 499h1v1h-1zM377 499h1v1h-1zM391 499h1v1h-1zM402 499h1v1h-1zM461 499h1v1h-1zM464 499h2v1h-2zM68 470h1v1h-1zM99 470h1v1h-1zM172 470h1v1h-1zM191 470h1v1h-1zM211 470h1v1h-1zM252 470h1v1h-1zM282 470h1v1h-1zM288 470h1v1h-1zM498 470h1v1h-1zM514 470h1v1h-1zM89 463h1v1h-1zM97 463h1v1h-1zM213 463h1v1h-1zM219 463h2v1h-2zM232 463h1v1h-1zM246 463h1v1h-1zM501 463h1v1h-1zM507 463h2v1h-2zM44 489h1v1h-1zM121 489h1v1h-1zM145 489h1v1h-1zM198 489h1v1h-1zM314 489h2v1h-2zM319 489h1v1h-1zM331 489h1v1h-1zM406 489h1v1h-1zM455 489h1v1h-1zM484 489h1v1h-1zM93 456h2v1h-2zM237 456h1v1h-1zM239 456h1v1h-1zM88 465h1v1h-1zM97 465h1v1h-1zM212 465h1v1h-1zM226 465h5v1h-5zM248 465h1v1h-1zM500 465h1v1h-1zM511 465h1v1h-1zM43 490h1v1h-1zM122 490h2v1h-2zM133 490h2v1h-2zM144 490h1v1h-1zM316 490h3v1h-3zM331 490h1v1h-1zM406 490h1v1h-1zM456 490h1v1h-1zM482 490h2v1h-2zM358 509h4v1h-4zM51 479h1v1h-1zM60 479h2v1h-2zM63 479h1v1h-1zM112 479h1v1h-1zM149 479h1v1h-1zM152 479h1v1h-1zM165 479h1v1h-1zM194 479h1v1h-1zM207 479h1v1h-1zM298 479h5v1h-5zM324 479h1v1h-1zM328 479h1v1h-1zM414 479h4v1h-4zM434 479h1v1h-1zM442 479h1v1h-1zM493 479h1v1h-1zM522 479h2v1h-2zM50 480h1v1h-1zM62 480h1v1h-1zM113 480h1v1h-1zM148 480h1v1h-1zM153 480h1v1h-1zM164 480h1v1h-1zM195 480h1v1h-1zM207 480h1v1h-1zM303 480h1v1h-1zM323 480h1v1h-1zM328 480h1v1h-1zM413 480h1v1h-1zM418 480h6v1h-6zM433 480h1v1h-1zM443 480h1v1h-1zM492 480h1v1h-1zM524 480h2v1h-2zM42 491h1v1h-1zM124 491h1v1h-1zM130 491h3v1h-3zM135 491h2v1h-2zM144 491h1v1h-1zM318 491h1v1h-1zM331 491h1v1h-1zM405 491h1v1h-1zM456 491h1v1h-1zM481 491h1v1h-1zM47 485h1v1h-1zM117 485h1v1h-1zM146 485h1v1h-1zM156 485h1v1h-1zM160 485h1v1h-1zM196 485h1v1h-1zM203 485h1v1h-1zM309 485h1v1h-1zM321 485h1v1h-1zM329 485h1v1h-1zM409 485h1v1h-1zM448 485h2v1h-2zM488 485h1v1h-1zM28 497h1v1h-1zM333 497h1v1h-1zM379 497h1v1h-1zM387 497h2v1h-2zM402 497h1v1h-1zM460 497h1v1h-1zM469 497h3v1h-3zM54 474h1v1h-1zM66 474h1v1h-1zM101 474h1v1h-1zM168 474h1v1h-1zM192 474h1v1h-1zM209 474h1v1h-1zM258 474h3v1h-3zM276 474h2v1h-2zM291 474h1v1h-1zM326 474h1v1h-1zM438 474h1v1h-1zM496 474h1v1h-1zM517 474h1v1h-1zM39 494h1v1h-1zM140 494h3v1h-3zM332 494h1v1h-1zM382 494h1v1h-1zM404 494h1v1h-1zM458 494h1v1h-1zM477 494h2v1h-2zM17 502h2v1h-2zM24 502h1v1h-1zM337 502h2v1h-2zM345 502h2v1h-2zM352 502h1v1h-1zM374 502h1v1h-1zM394 502h1v1h-1zM400 502h1v1h-1zM48 484h1v1h-1zM116 484h1v1h-1zM147 484h1v1h-1zM155 484h1v1h-1zM161 484h1v1h-1zM196 484h1v1h-1zM204 484h2v1h-2zM308 484h1v1h-1zM321 484h1v1h-1zM329 484h1v1h-1zM410 484h1v1h-1zM446 484h2v1h-2zM489 484h1v1h-1zM21 504h2v1h-2zM341 504h2v1h-2zM354 504h1v1h-1zM371 504h1v1h-1zM395 504h1v1h-1zM399 504h1v1h-1zM66 473h1v1h-1zM100 473h1v1h-1zM169 473h1v1h-1zM192 473h1v1h-1zM209 473h1v1h-1zM256 473h2v1h-2zM278 473h1v1h-1zM290 473h1v1h-1zM496 473h1v1h-1zM516 473h1v1h-1zM70 467h4v1h-4zM80 467h4v1h-4zM87 467h1v1h-1zM98 467h1v1h-1zM174 467h4v1h-4zM212 467h1v1h-1zM250 467h1v1h-1zM286 467h1v1h-1zM499 467h1v1h-1zM512 467h1v1h-1zM69 468h1v1h-1zM84 468h3v1h-3zM99 468h1v1h-1zM173 468h1v1h-1zM178 468h13v1h-13zM211 468h1v1h-1zM250 468h1v1h-1zM284 468h2v1h-2zM287 468h1v1h-1zM498 468h1v1h-1zM513 468h1v1h-1zM90 461h1v1h-1zM96 461h1v1h-1zM214 461h3v1h-3zM233 461h1v1h-1zM244 461h1v1h-1zM502 461h3v1h-3zM53 476h1v1h-1zM56 476h2v1h-2zM64 476h1v1h-1zM101 476h1v1h-1zM108 476h3v1h-3zM150 476h1v1h-1zM167 476h1v1h-1zM193 476h1v1h-1zM208 476h1v1h-1zM264 476h2v1h-2zM273 476h1v1h-1zM293 476h1v1h-1zM325 476h1v1h-1zM327 476h1v1h-1zM436 476h1v1h-1zM440 476h1v1h-1zM495 476h1v1h-1zM518 476h1v1h-1zM90 462h1v1h-1zM96 462h1v1h-1zM213 462h1v1h-1zM217 462h2v1h-2zM232 462h1v1h-1zM245 462h1v1h-1zM501 462h1v1h-1zM505 462h2v1h-2zM356 507h1v1h-1zM367 507h1v1h-1zM398 507h1v1h-1zM40 493h1v1h-1zM126 493h2v1h-2zM138 493h2v1h-2zM143 493h1v1h-1zM332 493h1v1h-1zM404 493h1v1h-1zM458 493h1v1h-1zM479 493h1v1h-1zM14 500h1v1h-1zM26 500h1v1h-1zM334 500h1v1h-1zM349 500h2v1h-2zM376 500h1v1h-1zM392 500h1v1h-1zM401 500h1v1h-1zM462 500h2v1h-2zM29 496h1v1h-1zM333 496h1v1h-1zM380 496h1v1h-1zM385 496h2v1h-2zM403 496h1v1h-1zM460 496h1v1h-1zM472 496h2v1h-2zM53 475h1v1h-1zM55 475h1v1h-1zM65 475h1v1h-1zM101 475h1v1h-1zM168 475h1v1h-1zM193 475h1v1h-1zM209 475h1v1h-1zM261 475h3v1h-3zM274 475h2v1h-2zM292 475h1v1h-1zM326 475h1v1h-1zM437 475h1v1h-1zM439 475h1v1h-1zM495 475h1v1h-1zM517 475h1v1h-1zM88 464h1v1h-1zM97 464h1v1h-1zM213 464h1v1h-1zM221 464h5v1h-5zM231 464h1v1h-1zM247 464h1v1h-1zM500 464h1v1h-1zM509 464h2v1h-2zM92 459h1v1h-1zM95 459h1v1h-1zM235 459h1v1h-1zM242 459h1v1h-1zM41 492h1v1h-1zM125 492h1v1h-1zM128 492h2v1h-2zM137 492h1v1h-1zM143 492h1v1h-1zM332 492h1v1h-1zM405 492h1v1h-1zM457 492h1v1h-1zM480 492h1v1h-1zM357 508h1v1h-1zM362 508h5v1h-5zM91 460h1v1h-1zM96 460h1v1h-1zM214 460h1v1h-1zM234 460h1v1h-1zM243 460h1v1h-1zM502 460h1v1h-1zM355 506h1v1h-1zM368 506h2v1h-2zM397 506h2v1h-2zM68 471h1v1h-1zM100 471h1v1h-1zM171 471h1v1h-1zM191 471h1v1h-1zM210 471h1v1h-1zM253 471h1v1h-1zM280 471h2v1h-2zM289 471h1v1h-1zM497 471h1v1h-1zM515 471h1v1h-1zM93 457h1v1h-1zM95 457h1v1h-1zM236 457h1v1h-1zM240 457h1v1h-1zM354 505h1v1h-1zM370 505h1v1h-1zM396 505h1v1h-1zM399 505h1v1h-1zM94 455h1v1h-1zM238 455h1v1h-1z" fill="#ff00ff"/>
<path d="M53 543h2v1h-2zM90 543h1v1h-1zM98 543h1v1h-1zM149 543h1v1h-1zM151 543h1v1h-1zM174 543h2v1h-2zM284 543h1v1h-1zM288 543h1v1h-1zM50 547h1v1h-1zM56 547h1v1h-1zM70 547h4v1h-4zM79 547h1v1h-1zM88 547h1v1h-1zM99 547h1v1h-1zM147 547h1v1h-1zM153 547h1v1h-1zM169 547h1v1h-1zM191 547h1v1h-1zM213 547h1v1h-1zM215 547h1v1h-1zM236 547h1v1h-1zM247 547h1v1h-1zM281 547h1v1h-1zM291 547h1v1h-1zM323 547h1v1h-1zM327 547h1v1h-1zM501 547h1v1h-1zM506 547h5v1h-5zM45 556h1v1h-1zM61 556h1v1h-1zM64 556h1v1h-1zM117 556h5v1h-5zM138 556h5v1h-5zM157 556h1v1h-1zM160 556h1v1h-1zM194 556h1v1h-1zM208 556h1v1h-1zM309 556h3v1h-3zM330 556h1v1h-1zM437 556h1v1h-1zM439 556h1v1h-1zM495 556h1v1h-1zM522 556h2v1h-2zM46 553h1v1h-1zM59 553h1v1h-1zM66 553h1v1h-1zM102 553h10v1h-10zM144 553h1v1h-1zM156 553h1v1h-1zM163 553h1v1h-1zM193 553h1v1h-1zM210 553h1v1h-1zM224 553h4v1h-4zM231 553h1v1h-1zM252 553h1v1h-1zM258 553h3v1h-3zM264 553h4v1h-4zM271 553h2v1h-2zM300 553h4v1h-4zM317 553h2v1h-2zM329 553h1v1h-1zM497 553h1v1h-1zM518 553h1v1h-1zM51 546h1v1h-1zM56 546h1v1h-1zM74 546h5v1h-5zM89 546h1v1h-1zM99 546h1v1h-1zM148 546h1v1h-1zM152 546h1v1h-1zM170 546h2v1h-2zM191 546h1v1h-1zM214 546h1v1h-1zM236 546h1v1h-1zM244 546h3v1h-3zM282 546h1v1h-1zM290 546h1v1h-1zM324 546h1v1h-1zM327 546h1v1h-1zM502 546h4v1h-4zM39 568h1v1h-1zM333 568h1v1h-1zM349 568h2v1h-2zM380 568h2v1h-2zM383 568h1v1h-1zM409 568h1v1h-1zM448 568h1v1h-1zM482 568h2v1h-2zM45 555h1v1h-1zM60 555h1v1h-1zM65 555h1v1h-1zM114 555h3v1h-3zM143 555h1v1h-1zM157 555h1v1h-1zM161 555h1v1h-1zM194 555h1v1h-1zM208 555h1v1h-1zM254 555h2v1h-2zM306 555h3v1h-3zM312 555h2v1h-2zM329 555h1v1h-1zM438 555h1v1h-1zM496 555h1v1h-1zM521 555h1v1h-1zM52 545h1v1h-1zM55 545h1v1h-1zM89 545h1v1h-1zM98 545h1v1h-1zM148 545h1v1h-1zM152 545h1v1h-1zM172 545h1v1h-1zM180 545h6v1h-6zM190 545h1v1h-1zM237 545h1v1h-1zM240 545h4v1h-4zM282 545h1v1h-1zM289 545h1v1h-1zM325 545h2v1h-2zM46 554h1v1h-1zM60 554h1v1h-1zM65 554h1v1h-1zM112 554h2v1h-2zM143 554h1v1h-1zM156 554h1v1h-1zM162 554h1v1h-1zM194 554h1v1h-1zM209 554h1v1h-1zM228 554h3v1h-3zM253 554h1v1h-1zM256 554h2v1h-2zM268 554h3v1h-3zM304 554h2v1h-2zM314 554h3v1h-3zM329 554h1v1h-1zM497 554h1v1h-1zM519 554h2v1h-2zM50 548h1v1h-1zM57 548h1v1h-1zM69 548h1v1h-1zM80 548h2v1h-2zM88 548h1v1h-1zM100 548h1v1h-1zM147 548h1v1h-1zM153 548h1v1h-1zM168 548h1v1h-1zM191 548h1v1h-1zM213 548h1v1h-1zM216 548h2v1h-2zM235 548h1v1h-1zM248 548h1v1h-1zM280 548h1v1h-1zM292 548h1v1h-1zM322 548h1v1h-1zM327 548h1v1h-1zM501 548h1v1h-1zM511 548h1v1h-1zM44 557h1v1h-1zM61 557h1v1h-1zM63 557h1v1h-1zM122 557h16v1h-16zM158 557h2v1h-2zM195 557h1v1h-1zM207 557h1v1h-1zM330 557h1v1h-1zM436 557h1v1h-1zM439 557h1v1h-1zM495 557h1v1h-1zM524 557h2v1h-2zM41 563h1v1h-1zM197 563h1v1h-1zM201 563h1v1h-1zM332 563h1v1h-1zM413 563h1v1h-1zM424 563h4v1h-4zM431 563h1v1h-1zM444 563h1v1h-1zM489 563h1v1h-1zM49 549h1v1h-1zM57 549h1v1h-1zM69 549h1v1h-1zM82 549h1v1h-1zM87 549h1v1h-1zM100 549h1v1h-1zM146 549h1v1h-1zM154 549h1v1h-1zM167 549h1v1h-1zM192 549h1v1h-1zM212 549h1v1h-1zM218 549h1v1h-1zM234 549h1v1h-1zM249 549h1v1h-1zM279 549h1v1h-1zM292 549h1v1h-1zM322 549h1v1h-1zM328 549h1v1h-1zM500 549h1v1h-1zM512 549h2v1h-2zM39 567h1v1h-1zM333 567h1v1h-1zM382 567h1v1h-1zM410 567h1v1h-1zM447 567h1v1h-1zM484 567h2v1h-2zM47 552h1v1h-1zM59 552h1v1h-1zM67 552h1v1h-1zM86 552h1v1h-1zM102 552h1v1h-1zM144 552h1v1h-1zM155 552h1v1h-1zM164 552h1v1h-1zM193 552h1v1h-1zM210 552h1v1h-1zM222 552h2v1h-2zM232 552h1v1h-1zM251 552h1v1h-1zM261 552h3v1h-3zM273 552h2v1h-2zM296 552h4v1h-4zM319 552h1v1h-1zM328 552h1v1h-1zM498 552h1v1h-1zM516 552h2v1h-2zM41 564h1v1h-1zM197 564h1v1h-1zM200 564h1v1h-1zM332 564h1v1h-1zM412 564h1v1h-1zM428 564h3v1h-3zM445 564h1v1h-1zM488 564h1v1h-1zM53 544h1v1h-1zM55 544h1v1h-1zM90 544h1v1h-1zM98 544h1v1h-1zM149 544h1v1h-1zM151 544h1v1h-1zM173 544h1v1h-1zM176 544h4v1h-4zM186 544h5v1h-5zM238 544h2v1h-2zM283 544h1v1h-1zM288 544h1v1h-1zM326 544h1v1h-1zM44 558h1v1h-1zM62 558h2v1h-2zM158 558h1v1h-1zM195 558h1v1h-1zM207 558h1v1h-1zM330 558h1v1h-1zM435 558h1v1h-1zM440 558h1v1h-1zM494 558h1v1h-1zM526 558h1v1h-1zM42 561h1v1h-1zM196 561h1v1h-1zM204 561h1v1h-1zM331 561h1v1h-1zM414 561h4v1h-4zM433 561h1v1h-1zM442 561h1v1h-1zM491 561h1v1h-1zM91 541h1v1h-1zM97 541h1v1h-1zM286 541h1v1h-1zM40 566h1v1h-1zM198 566h1v1h-1zM333 566h1v1h-1zM410 566h1v1h-1zM446 566h1v1h-1zM486 566h1v1h-1zM47 551h1v1h-1zM58 551h1v1h-1zM67 551h1v1h-1zM84 551h3v1h-3zM101 551h1v1h-1zM145 551h1v1h-1zM155 551h1v1h-1zM165 551h1v1h-1zM193 551h1v1h-1zM211 551h1v1h-1zM220 551h2v1h-2zM232 551h1v1h-1zM250 551h1v1h-1zM275 551h2v1h-2zM294 551h2v1h-2zM320 551h1v1h-1zM328 551h1v1h-1zM499 551h1v1h-1zM515 551h1v1h-1zM42 562h1v1h-1zM197 562h1v1h-1zM202 562h2v1h-2zM332 562h1v1h-1zM413 562h1v1h-1zM418 562h6v1h-6zM432 562h1v1h-1zM443 562h1v1h-1zM490 562h1v1h-1zM43 560h1v1h-1zM196 560h1v1h-1zM205 560h1v1h-1zM331 560h1v1h-1zM434 560h1v1h-1zM442 560h1v1h-1zM492 560h1v1h-1zM48 550h1v1h-1zM58 550h1v1h-1zM68 550h1v1h-1zM83 550h1v1h-1zM87 550h1v1h-1zM101 550h1v1h-1zM145 550h1v1h-1zM154 550h1v1h-1zM166 550h1v1h-1zM192 550h1v1h-1zM212 550h1v1h-1zM219 550h1v1h-1zM233 550h1v1h-1zM250 550h1v1h-1zM277 550h2v1h-2zM293 550h1v1h-1zM321 550h1v1h-1zM328 550h1v1h-1zM499 550h1v1h-1zM514 550h1v1h-1zM54 542h1v1h-1zM91 542h1v1h-1zM97 542h1v1h-1zM150 542h1v1h-1zM285 542h1v1h-1zM287 542h1v1h-1zM40 565h1v1h-1zM198 565h2v1h-2zM332 565h1v1h-1zM411 565h1v1h-1zM445 565h1v1h-1zM487 565h1v1h-1zM43 559h1v1h-1zM62 559h1v1h-1zM195 559h1v1h-1zM206 559h1v1h-1zM331 559h1v1h-1zM434 559h1v1h-1zM441 559h1v1h-1zM493 559h1v1h-1zM93 538h1v1h-1zM95 538h1v1h-1zM92 540h1v1h-1zM96 540h1v1h-1zM92 539h1v1h-1zM96 539h1v1h-1zM94 536h1v1h-1zM93 537h1v1h-1zM95 537h1v1h-1zM94 535h1v1h-1z" fill="#d80000"/>
</svg>
<div class="t" style="left:16px;top:571px;font-size:14px;color:#000;transform:scaleX(0.81);transform-origin:left top;">06</div>
<div class="t" style="left:64px;top:571px;font-size:14px;color:#000;transform:scaleX(0.81);transform-origin:left top;">06/17</div>
<div class="t" style="left:144px;top:571px;font-size:14px;color:#000;transform:scaleX(0.81);transform-origin:left top;">07</div>
<div class="t" style="left:176px;top:571px;font-size:14px;color:#000;transform:scaleX(0.81);transform-origin:left top;">07/07</div>
<div class="t" style="left:224px;top:571px;font-size:14px;color:#000;transform:scaleX(0.81);transform-origin:left top;">07/15</div>
<div class="t" style="left:272px;top:571px;font-size:14px;color:#000;transform:scaleX(0.81);transform-origin:left top;">07/23</div>
<div class="t" style="left:328px;top:571px;font-size:14px;color:#000;transform:scaleX(0.81);transform-origin:left top;">08</div>
<div class="t" style="left:360px;top:571px;font-size:14px;color:#000;transform:scaleX(0.81);transform-origin:left top;">08/07</div>
<div class="t" style="left:408px;top:571px;font-size:14px;color:#000;transform:scaleX(0.81);transform-origin:left top;">08/18</div>
<div class="t" style="left:488px;top:571px;font-size:14px;color:#000;transform:scaleX(0.81);transform-origin:left top;">09</div>
<div style="position:absolute;left:4px;top:571px;width:538px;height:15px;overflow:hidden"><div class="t" style="left:533px;top:0;font-size:14px;transform:scaleX(0.81);transform-origin:left top">0</div></div>
<div style="position:absolute;left:549px;top:287px;width:428px;height:1px;background:#6e8194;"></div>
<div style="position:absolute;left:549px;top:287px;width:1px;height:301px;background:#6e8194;"></div>
<div style="position:absolute;left:549px;top:587px;width:428px;height:1px;background:#6e8194;"></div>
<div style="position:absolute;left:550px;top:288px;width:423px;height:299px;background:#fff;"></div>
<div style="position:absolute;left:974px;top:288px;width:3px;height:299px;background:#fff;"></div>
<div style="position:absolute;left:975px;top:289px;width:2px;height:13px;background:#c9d2de;"></div>
<div style="position:absolute;left:975px;top:303px;width:2px;height:38px;background:#c9d4e1;"></div>
<div style="position:absolute;left:975px;top:573px;width:2px;height:13px;background:#c9d2de;"></div>
<div style="position:absolute;left:973px;top:287px;width:1px;height:301px;background:#6e8194;"></div>
<div style="position:absolute;left:550px;top:288px;width:423px;height:24px;background:#2b69b1;"></div>
<div style="position:absolute;left:635px;top:288px;width:1px;height:24px;background:#4f83c0;"></div>
<div style="position:absolute;left:720px;top:288px;width:1px;height:24px;background:#4f83c0;"></div>
<div style="position:absolute;left:805px;top:288px;width:1px;height:24px;background:#4f83c0;"></div>
<div style="position:absolute;left:889px;top:288px;width:1px;height:24px;background:#4f83c0;"></div>
<div style="position:absolute;left:550px;top:312px;width:85px;height:275px;background:#d5e0eb;"></div>
<div style="position:absolute;left:550px;top:335px;width:423px;height:1px;background:#a9bdd0;"></div>
<div style="position:absolute;left:550px;top:360px;width:423px;height:1px;background:#a9bdd0;"></div>
<div style="position:absolute;left:550px;top:385px;width:423px;height:1px;background:#a9bdd0;"></div>
<div style="position:absolute;left:550px;top:410px;width:423px;height:1px;background:#a9bdd0;"></div>
<div style="position:absolute;left:550px;top:435px;width:423px;height:1px;background:#a9bdd0;"></div>
<div style="position:absolute;left:550px;top:460px;width:423px;height:1px;background:#a9bdd0;"></div>
<div style="position:absolute;left:550px;top:485px;width:423px;height:1px;background:#a9bdd0;"></div>
<div style="position:absolute;left:550px;top:510px;width:423px;height:1px;background:#a9bdd0;"></div>
<div style="position:absolute;left:550px;top:534px;width:423px;height:1px;background:#a9bdd0;"></div>
<div style="position:absolute;left:550px;top:559px;width:423px;height:1px;background:#a9bdd0;"></div>
<div style="position:absolute;left:550px;top:584px;width:423px;height:1px;background:#a9bdd0;"></div>
<div style="position:absolute;left:635px;top:312px;width:1px;height:275px;background:#a9bdd0;"></div>
<div style="position:absolute;left:720px;top:312px;width:1px;height:275px;background:#a9bdd0;"></div>
<div style="position:absolute;left:805px;top:312px;width:1px;height:275px;background:#a9bdd0;"></div>
<div style="position:absolute;left:889px;top:312px;width:1px;height:275px;background:#a9bdd0;"></div>
<div class="t" style="left:485px;width:200px;text-align:center;top:293px;font-size:12px;color:#fff;">국고5Y</div>
<div class="t" style="left:578.0px;width:200px;text-align:center;top:293px;font-size:12px;color:#fff;">11시30분</div>
<div class="t" style="left:663.0px;width:200px;text-align:center;top:293px;font-size:12px;color:#fff;">16시00분</div>
<div class="t" style="left:747.5px;width:200px;text-align:center;top:293px;font-size:12px;color:#fff;">전기</div>
<div class="t" style="left:830.5px;width:200px;text-align:center;top:293px;font-size:12px;color:#fff;">전기대비</div>
<svg style="position:absolute;left:629px;top:304px" width="6" height="6"><path d="M5.5 0.5 L5.5 5.5 L0.5 5.5 Z" fill="#fff"/></svg>
<div class="t" style="left:492.5px;width:200px;text-align:center;top:316px;font-size:14px;color:#000;transform:scaleX(0.9);transform-origin:center top;">25/09/08</div>
<div class="t" style="left:513px;width:200px;text-align:right;top:316px;font-size:14px;color:#000;transform:scaleX(0.81);transform-origin:right top;">2,613</div>
<div class="t" style="left:598px;width:200px;text-align:right;top:316px;font-size:14px;color:#000;transform:scaleX(0.81);transform-origin:right top;">2,608</div>
<div class="t" style="left:682px;width:200px;text-align:right;top:316px;font-size:14px;color:#000;transform:scaleX(0.81);transform-origin:right top;">2,620</div>
<div class="t" style="left:770px;width:200px;text-align:right;top:316px;font-size:14px;color:#0000d0;transform:scaleX(0.81);transform-origin:right top;">−0,012</div>
<div class="t" style="left:492.5px;width:200px;text-align:center;top:340px;font-size:14px;color:#000;transform:scaleX(0.9);transform-origin:center top;">25/09/05</div>
<div class="t" style="left:513px;width:200px;text-align:right;top:340px;font-size:14px;color:#000;transform:scaleX(0.81);transform-origin:right top;">2,627</div>
<div class="t" style="left:598px;width:200px;text-align:right;top:340px;font-size:14px;color:#000;transform:scaleX(0.81);transform-origin:right top;">2,620</div>
<div class="t" style="left:682px;width:200px;text-align:right;top:340px;font-size:14px;color:#000;transform:scaleX(0.81);transform-origin:right top;">2,643</div>
<div class="t" style="left:770px;width:200px;text-align:right;top:340px;font-size:14px;color:#0000d0;transform:scaleX(0.81);transform-origin:right top;">−0,023</div>
<div class="t" style="left:492.5px;width:200px;text-align:center;top:365px;font-size:14px;color:#000;transform:scaleX(0.9);transform-origin:center top;">25/09/04</div>
<div class="t" style="left:513px;width:200px;text-align:right;top:365px;font-size:14px;color:#000;transform:scaleX(0.81);transform-origin:right top;">2,637</div>
<div class="t" style="left:598px;width:200px;text-align:right;top:365px;font-size:14px;color:#000;transform:scaleX(0.81);transform-origin:right top;">2,643</div>
<div class="t" style="left:682px;width:200px;text-align:right;top:365px;font-size:14px;color:#000;transform:scaleX(0.81);transform-origin:right top;">2,654</div>
<div class="t" style="left:770px;width:200px;text-align:right;top:365px;font-size:14px;color:#0000d0;transform:scaleX(0.81);transform-origin:right top;">−0,011</div>
<div class="t" style="left:492.5px;width:200px;text-align:center;top:390px;font-size:14px;color:#000;transform:scaleX(0.9);transform-origin:center top;">25/09/03</div>
<div class="t" style="left:513px;width:200px;text-align:right;top:390px;font-size:14px;color:#000;transform:scaleX(0.81);transform-origin:right top;">2,639</div>
<div class="t" style="left:598px;width:200px;text-align:right;top:390px;font-size:14px;color:#000;transform:scaleX(0.81);transform-origin:right top;">2,654</div>
<div class="t" style="left:682px;width:200px;text-align:right;top:390px;font-size:14px;color:#000;transform:scaleX(0.81);transform-origin:right top;">2,619</div>
<div class="t" style="left:770px;width:200px;text-align:right;top:390px;font-size:14px;color:#d80000;transform:scaleX(0.81);transform-origin:right top;">0,035</div>
<div class="t" style="left:492.5px;width:200px;text-align:center;top:415px;font-size:14px;color:#000;transform:scaleX(0.9);transform-origin:center top;">25/09/02</div>
<div class="t" style="left:513px;width:200px;text-align:right;top:415px;font-size:14px;color:#000;transform:scaleX(0.81);transform-origin:right top;">2,605</div>
<div class="t" style="left:598px;width:200px;text-align:right;top:415px;font-size:14px;color:#000;transform:scaleX(0.81);transform-origin:right top;">2,619</div>
<div class="t" style="left:682px;width:200px;text-align:right;top:415px;font-size:14px;color:#000;transform:scaleX(0.81);transform-origin:right top;">2,597</div>
<div class="t" style="left:770px;width:200px;text-align:right;top:415px;font-size:14px;color:#d80000;transform:scaleX(0.81);transform-origin:right top;">0,022</div>
<div class="t" style="left:492.5px;width:200px;text-align:center;top:440px;font-size:14px;color:#000;transform:scaleX(0.9);transform-origin:center top;">25/09/01</div>
<div class="t" style="left:513px;width:200px;text-align:right;top:440px;font-size:14px;color:#000;transform:scaleX(0.81);transform-origin:right top;">2,588</div>
<div class="t" style="left:598px;width:200px;text-align:right;top:440px;font-size:14px;color:#000;transform:scaleX(0.81);transform-origin:right top;">2,597</div>
<div class="t" style="left:682px;width:200px;text-align:right;top:440px;font-size:14px;color:#000;transform:scaleX(0.81);transform-origin:right top;">2,583</div>
<div class="t" style="left:770px;width:200px;text-align:right;top:440px;font-size:14px;color:#d80000;transform:scaleX(0.81);transform-origin:right top;">0,014</div>
<div class="t" style="left:492.5px;width:200px;text-align:center;top:465px;font-size:14px;color:#000;transform:scaleX(0.9);transform-origin:center top;">25/08/29</div>
<div class="t" style="left:513px;width:200px;text-align:right;top:465px;font-size:14px;color:#000;transform:scaleX(0.81);transform-origin:right top;">2,590</div>
<div class="t" style="left:598px;width:200px;text-align:right;top:465px;font-size:14px;color:#000;transform:scaleX(0.81);transform-origin:right top;">2,583</div>
<div class="t" style="left:682px;width:200px;text-align:right;top:465px;font-size:14px;color:#000;transform:scaleX(0.81);transform-origin:right top;">2,576</div>
<div class="t" style="left:770px;width:200px;text-align:right;top:465px;font-size:14px;color:#d80000;transform:scaleX(0.81);transform-origin:right top;">0,007</div>
<div class="t" style="left:492.5px;width:200px;text-align:center;top:490px;font-size:14px;color:#000;transform:scaleX(0.9);transform-origin:center top;">25/08/28</div>
<div class="t" style="left:513px;width:200px;text-align:right;top:490px;font-size:14px;color:#000;transform:scaleX(0.81);transform-origin:right top;">2,554</div>
<div class="t" style="left:598px;width:200px;text-align:right;top:490px;font-size:14px;color:#000;transform:scaleX(0.81);transform-origin:right top;">2,576</div>
<div class="t" style="left:682px;width:200px;text-align:right;top:490px;font-size:14px;color:#000;transform:scaleX(0.81);transform-origin:right top;">2,569</div>
<div class="t" style="left:770px;width:200px;text-align:right;top:490px;font-size:14px;color:#d80000;transform:scaleX(0.81);transform-origin:right top;">0,007</div>
<div class="t" style="left:492.5px;width:200px;text-align:center;top:515px;font-size:14px;color:#000;transform:scaleX(0.9);transform-origin:center top;">25/08/27</div>
<div class="t" style="left:513px;width:200px;text-align:right;top:515px;font-size:14px;color:#000;transform:scaleX(0.81);transform-origin:right top;">2,580</div>
<div class="t" style="left:598px;width:200px;text-align:right;top:515px;font-size:14px;color:#000;transform:scaleX(0.81);transform-origin:right top;">2,569</div>
<div class="t" style="left:682px;width:200px;text-align:right;top:515px;font-size:14px;color:#000;transform:scaleX(0.81);transform-origin:right top;">2,596</div>
<div class="t" style="left:770px;width:200px;text-align:right;top:515px;font-size:14px;color:#0000d0;transform:scaleX(0.81);transform-origin:right top;">−0,027</div>
<div class="t" style="left:492.5px;width:200px;text-align:center;top:539px;font-size:14px;color:#000;transform:scaleX(0.9);transform-origin:center top;">25/08/26</div>
<div class="t" style="left:513px;width:200px;text-align:right;top:539px;font-size:14px;color:#000;transform:scaleX(0.81);transform-origin:right top;">2,591</div>
<div class="t" style="left:598px;width:200px;text-align:right;top:539px;font-size:14px;color:#000;transform:scaleX(0.81);transform-origin:right top;">2,596</div>
<div class="t" style="left:682px;width:200px;text-align:right;top:539px;font-size:14px;color:#000;transform:scaleX(0.81);transform-origin:right top;">2,602</div>
<div class="t" style="left:770px;width:200px;text-align:right;top:539px;font-size:14px;color:#0000d0;transform:scaleX(0.81);transform-origin:right top;">−0,006</div>
<div class="t" style="left:492.5px;width:200px;text-align:center;top:564px;font-size:14px;color:#000;transform:scaleX(0.9);transform-origin:center top;">25/08/25</div>
<div class="t" style="left:513px;width:200px;text-align:right;top:564px;font-size:14px;color:#000;transform:scaleX(0.81);transform-origin:right top;">2,600</div>
<div class="t" style="left:598px;width:200px;text-align:right;top:564px;font-size:14px;color:#000;transform:scaleX(0.81);transform-origin:right top;">2,602</div>
<div class="t" style="left:682px;width:200px;text-align:right;top:564px;font-size:14px;color:#000;transform:scaleX(0.81);transform-origin:right top;">2,624</div>
<div class="t" style="left:770px;width:200px;text-align:right;top:564px;font-size:14px;color:#0000d0;transform:scaleX(0.81);transform-origin:right top;">−0,022</div>
</body></html>
